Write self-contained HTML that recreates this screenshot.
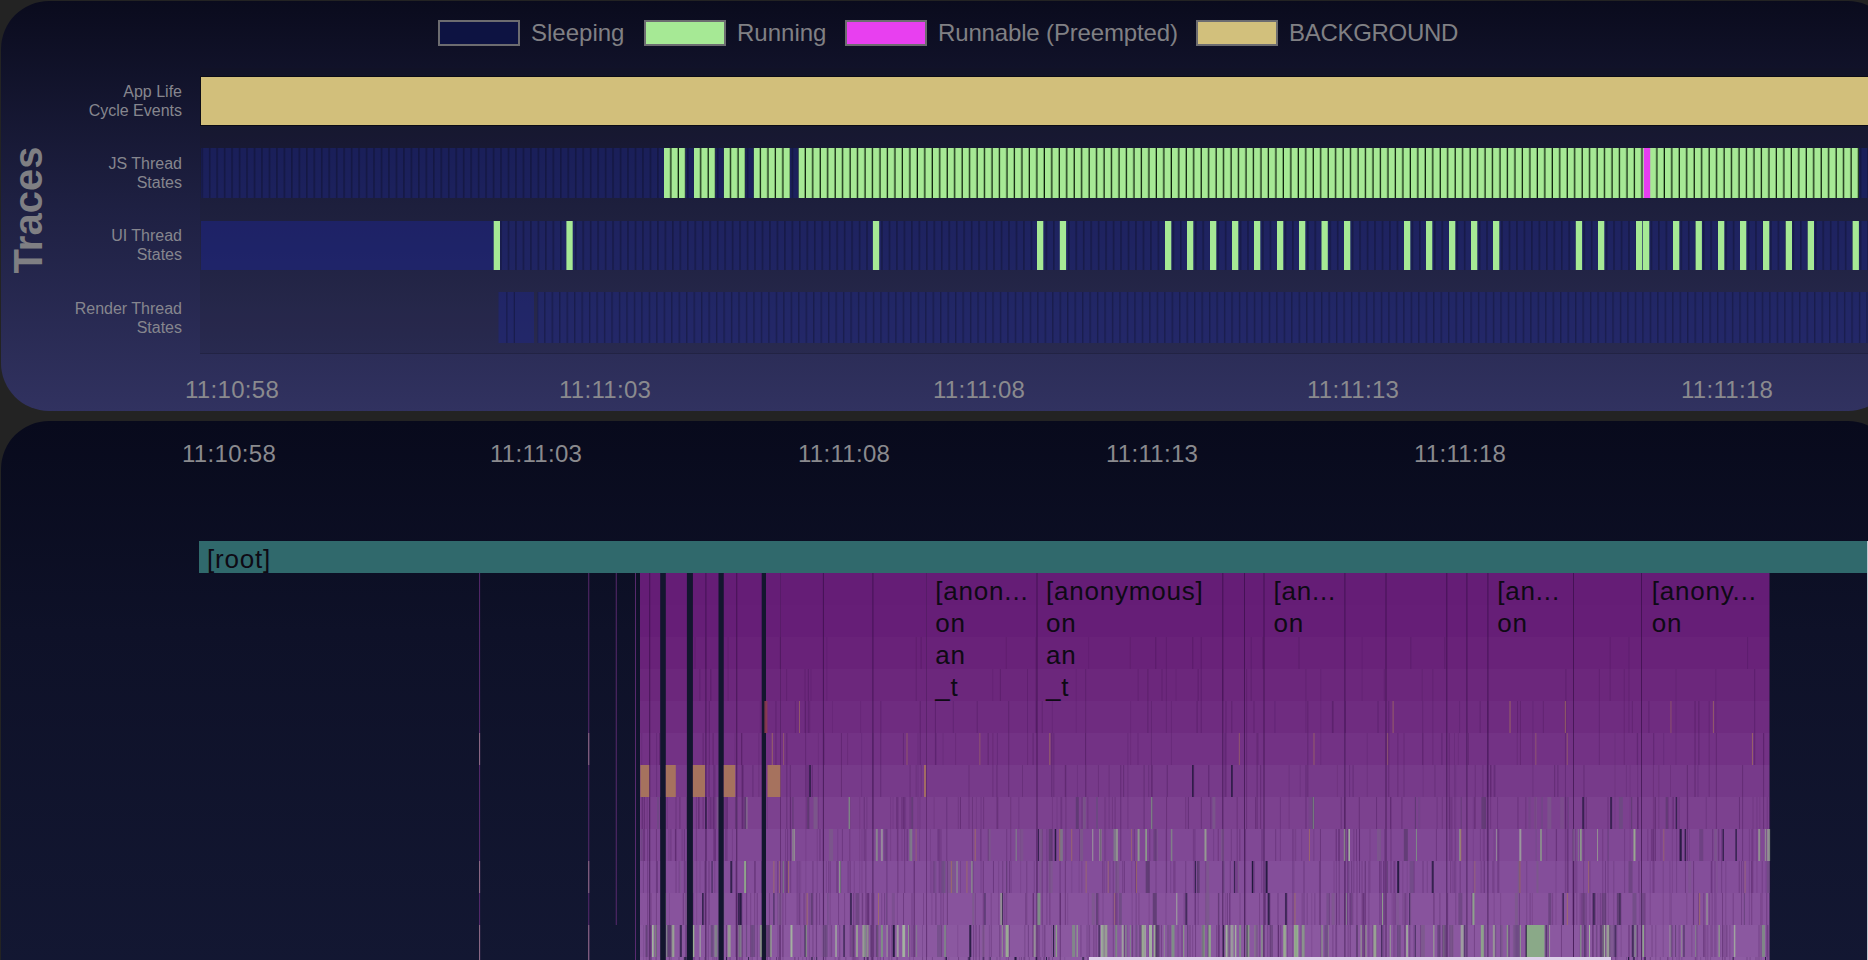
<!DOCTYPE html><html><head><meta charset="utf-8"><style>
*{margin:0;padding:0;box-sizing:border-box}
html,body{width:1868px;height:960px;overflow:hidden;background:#232323;font-family:"Liberation Sans",sans-serif}
.a{position:absolute}
#p1{left:1px;top:1px;width:1895px;height:410px;border-radius:48px;background:linear-gradient(180deg,#0a0b1d 0%,#1e2042 50%,#313260 100%);overflow:hidden}
#p2{left:1px;top:421px;width:1895px;height:700px;border-radius:48px;background:linear-gradient(180deg,#080a1c 0%,#0e1128 30%,#151a37 100%);overflow:hidden}
.lg{position:absolute;top:20px;height:26px;width:82px;border:2px solid #6c6c70}
.lt{position:absolute;top:17px;font-size:24px;line-height:28px;color:#808084;white-space:nowrap}
.rl{position:absolute;right:0;width:183px;text-align:right;font-size:16px;line-height:19px;color:#86868e}
.tm{position:absolute;font-size:24px;line-height:28px;color:#8a8a8e;white-space:nowrap;letter-spacing:0.3px}
.fl{font-family:"Liberation Sans",sans-serif;font-size:26px;letter-spacing:0.8px;fill:#0e0a14}
</style></head><body>
<div id="p1" class="a"><div class="lg" style="left:437px;top:19px;background:#0d1342"></div><div class="lt" style="left:530px;top:17.5px;letter-spacing:0">Sleeping</div><div class="lg" style="left:643px;top:19px;background:#a6e995"></div><div class="lt" style="left:736px;top:17.5px;letter-spacing:0">Running</div><div class="lg" style="left:844px;top:19px;background:#e83ff0"></div><div class="lt" style="left:937px;top:17.5px;letter-spacing:-0.15px">Runnable (Preempted)</div><div class="lg" style="left:1195px;top:19px;background:#d2c07c"></div><div class="lt" style="left:1288px;top:17.5px;letter-spacing:-0.3px">BACKGROUND</div><div class="a" style="left:-38.2px;top:188.6px;width:130px;height:40px;font-size:40px;font-weight:bold;line-height:40px;color:#7f7f83;transform:rotate(-90deg);transform-origin:50% 50%;text-align:center;white-space:nowrap">Traces</div><div class="rl" style="left:-2px;top:81px">App Life<br>Cycle Events</div><div class="rl" style="left:-2px;top:153px">JS Thread<br>States</div><div class="rl" style="left:-2px;top:225px">UI Thread<br>States</div><div class="rl" style="left:-2px;top:298px">Render Thread<br>States</div><div class="tm" style="left:184px;top:374.5px">11:10:58</div><div class="tm" style="left:558px;top:374.5px">11:11:03</div><div class="tm" style="left:932px;top:374.5px">11:11:08</div><div class="tm" style="left:1306px;top:374.5px">11:11:13</div><div class="tm" style="left:1680px;top:374.5px">11:11:18</div><svg class="a" style="left:-1px;top:-1px" width="1868" height="411"><rect x="200" y="68" width="1668" height="286" fill="#181818" fill-opacity="0.12"/><rect x="200" y="353" width="1668" height="1" fill="#000" fill-opacity="0.15"/><rect x="200.5" y="76.5" width="1700" height="49" fill="#d2bf7b" stroke="#0b0b16" stroke-width="1"/><defs><pattern id="st" x="201.4" y="0" width="7.47" height="10" patternUnits="userSpaceOnUse"><rect x="0" y="0" width="7.47" height="10" fill="#1c268c" fill-opacity="0.42"/><rect x="0" y="0" width="1.6" height="10" fill="#000" fill-opacity="0.25"/></pattern><pattern id="gr" x="664" y="0" width="7.47" height="10" patternUnits="userSpaceOnUse"><rect x="0" y="0" width="7.47" height="10" fill="#a6e995"/><rect x="6.2" y="0" width="1.27" height="10" fill="#0c1f0a"/></pattern></defs><rect x="201" y="148" width="1667" height="50" fill="url(#st)"/><rect x="664" y="148" width="21.41" height="50" fill="url(#gr)"/><rect x="693.88" y="148" width="21.41" height="50" fill="url(#gr)"/><rect x="723.76" y="148" width="21.41" height="50" fill="url(#gr)"/><rect x="753.64" y="148" width="36.35" height="50" fill="url(#gr)"/><rect x="798.46" y="148" width="1060.54" height="50" fill="url(#gr)"/><rect x="1643.8" y="148" width="6.4" height="50" fill="#e63ff0"/><rect x="201" y="221" width="293" height="49" fill="#1c2696" fill-opacity="0.45"/><rect x="494" y="221" width="1374" height="49" fill="url(#st)"/><rect x="493.7" y="221" width="6.3" height="49" fill="#a6e995"/><rect x="566.4" y="221" width="6.3" height="49" fill="#a6e995"/><rect x="872.9" y="221" width="6.3" height="49" fill="#a6e995"/><rect x="1037" y="221" width="6.3" height="49" fill="#a6e995"/><rect x="1059.8" y="221" width="6.3" height="49" fill="#a6e995"/><rect x="1165" y="221" width="6.3" height="49" fill="#a6e995"/><rect x="1187" y="221" width="6.3" height="49" fill="#a6e995"/><rect x="1210" y="221" width="6.3" height="49" fill="#a6e995"/><rect x="1232" y="221" width="6.3" height="49" fill="#a6e995"/><rect x="1254" y="221" width="6.3" height="49" fill="#a6e995"/><rect x="1277" y="221" width="6.3" height="49" fill="#a6e995"/><rect x="1299" y="221" width="6.3" height="49" fill="#a6e995"/><rect x="1321.5" y="221" width="6.3" height="49" fill="#a6e995"/><rect x="1344" y="221" width="6.3" height="49" fill="#a6e995"/><rect x="1404" y="221" width="6.3" height="49" fill="#a6e995"/><rect x="1426" y="221" width="6.3" height="49" fill="#a6e995"/><rect x="1449" y="221" width="6.3" height="49" fill="#a6e995"/><rect x="1471" y="221" width="6.3" height="49" fill="#a6e995"/><rect x="1493" y="221" width="6.3" height="49" fill="#a6e995"/><rect x="1575.8" y="221" width="6.3" height="49" fill="#a6e995"/><rect x="1598" y="221" width="6.3" height="49" fill="#a6e995"/><rect x="1636" y="221" width="6.3" height="49" fill="#a6e995"/><rect x="1643" y="221" width="6.3" height="49" fill="#a6e995"/><rect x="1673" y="221" width="6.3" height="49" fill="#a6e995"/><rect x="1695.6" y="221" width="6.3" height="49" fill="#a6e995"/><rect x="1718" y="221" width="6.3" height="49" fill="#a6e995"/><rect x="1740" y="221" width="6.3" height="49" fill="#a6e995"/><rect x="1763" y="221" width="6.3" height="49" fill="#a6e995"/><rect x="1785.7" y="221" width="6.3" height="49" fill="#a6e995"/><rect x="1807.7" y="221" width="6.3" height="49" fill="#a6e995"/><rect x="1852.6" y="221" width="6.3" height="49" fill="#a6e995"/><defs><pattern id="st2" x="551.6" y="0" width="7.47" height="10" patternUnits="userSpaceOnUse"><rect x="0" y="0" width="7.47" height="10" fill="#1c268c" fill-opacity="0.42"/><rect x="0" y="0" width="1.4" height="10" fill="#000" fill-opacity="0.25"/></pattern></defs><rect x="498.5" y="292" width="35.5" height="51" fill="#1c268c" fill-opacity="0.45"/><rect x="506.2" y="292" width="1.3" height="51" fill="#000" fill-opacity="0.25"/><rect x="513.7" y="292" width="1.3" height="51" fill="#000" fill-opacity="0.25"/><rect x="537.4" y="292" width="1331" height="51" fill="url(#st2)"/></svg></div>
<div id="p2" class="a"><div class="tm" style="left:181px;top:18.5px">11:10:58</div><div class="tm" style="left:489px;top:18.5px">11:11:03</div><div class="tm" style="left:797px;top:18.5px">11:11:08</div><div class="tm" style="left:1105px;top:18.5px">11:11:13</div><div class="tm" style="left:1413px;top:18.5px">11:11:18</div></div>
<svg class="a" style="left:0;top:0" width="1868" height="960"><rect x="199" y="541" width="1668" height="32" fill="#30696c"/><text class="fl" x="207" y="567.5">[root]</text><rect x="640" y="573" width="1129.5" height="32" fill="#651d76"/><rect x="640" y="605" width="1129.5" height="32" fill="#661e77"/><rect x="640" y="637" width="1129.5" height="32" fill="#692279"/><rect x="640" y="669" width="1129.5" height="32" fill="#6c277c"/><rect x="640" y="701" width="1129.5" height="32" fill="#6f2c80"/><rect x="640" y="733" width="1129.5" height="32" fill="#733285"/><rect x="640" y="765" width="1129.5" height="32" fill="#773a8a"/><rect x="640" y="797" width="1129.5" height="32" fill="#7c418f"/><rect x="640" y="829" width="1129.5" height="32" fill="#804895"/><rect x="640" y="861" width="1129.5" height="32" fill="#844e9a"/><rect x="640" y="893" width="1129.5" height="32" fill="#88539d"/><rect x="640" y="925" width="1129.5" height="32" fill="#8b58a0"/><rect x="640" y="957" width="1129.5" height="32" fill="#8e5ca3"/><rect x="479.1" y="573" width="1" height="387" fill="#6a3080" fill-opacity="0.8"/><rect x="588.25" y="573" width="1" height="387" fill="#6a3080" fill-opacity="0.8"/><rect x="615.75" y="573" width="1" height="352" fill="#6a3080" fill-opacity="0.8"/><rect x="635.0" y="573" width="1" height="387" fill="#6a3080" fill-opacity="0.8"/><rect x="479.1" y="733" width="1" height="32" fill="#a08090" fill-opacity="0.8"/><rect x="479.1" y="861" width="1" height="32" fill="#a08090" fill-opacity="0.8"/><rect x="479.1" y="925" width="1" height="35" fill="#a08090" fill-opacity="0.8"/><rect x="588.25" y="733" width="1" height="32" fill="#a08090" fill-opacity="0.8"/><rect x="588.25" y="861" width="1" height="32" fill="#a08090" fill-opacity="0.8"/><rect x="588.25" y="925" width="1" height="35" fill="#a08090" fill-opacity="0.8"/><rect x="649.2" y="573" width="1" height="387" fill="#2e0c40" fill-opacity="0.6"/><rect x="705.4" y="573" width="1" height="387" fill="#2e0c40" fill-opacity="0.6"/><rect x="736.25" y="573" width="1" height="387" fill="#2e0c40" fill-opacity="0.6"/><rect x="822.9" y="573" width="1" height="387" fill="#2e0c40" fill-opacity="0.6"/><rect x="872.4" y="573" width="1" height="387" fill="#2e0c40" fill-opacity="0.6"/><rect x="1036.5" y="573" width="1" height="387" fill="#2e0c40" fill-opacity="0.6"/><rect x="1222.3" y="573" width="1" height="387" fill="#2e0c40" fill-opacity="0.6"/><rect x="1244" y="573" width="1" height="387" fill="#2e0c40" fill-opacity="0.6"/><rect x="1263.5" y="573" width="1" height="387" fill="#2e0c40" fill-opacity="0.6"/><rect x="1344.4" y="573" width="1" height="387" fill="#2e0c40" fill-opacity="0.6"/><rect x="1385.5" y="573" width="1" height="387" fill="#2e0c40" fill-opacity="0.6"/><rect x="1446.3" y="573" width="1" height="387" fill="#2e0c40" fill-opacity="0.6"/><rect x="1466.4" y="573" width="1" height="387" fill="#2e0c40" fill-opacity="0.6"/><rect x="1487.4" y="573" width="1" height="387" fill="#2e0c40" fill-opacity="0.6"/><rect x="1573" y="573" width="1" height="387" fill="#2e0c40" fill-opacity="0.6"/><rect x="1641" y="573" width="1" height="387" fill="#2e0c40" fill-opacity="0.6"/><rect x="780" y="573" width="1" height="387" fill="#4a1a5a" fill-opacity="0.5"/><rect x="926" y="573" width="1" height="387" fill="#4a1a5a" fill-opacity="0.5"/><rect x="1005.77" y="637" width="1" height="32" fill="#3c0f4c" fill-opacity="0.2108094041773299"/><rect x="694.54" y="637" width="1" height="32" fill="#3c0f4c" fill-opacity="0.20410845088989465"/><rect x="705.51" y="637" width="1" height="32" fill="#3c0f4c" fill-opacity="0.1286240014416565"/><rect x="1129.8" y="637" width="1" height="32" fill="#3c0f4c" fill-opacity="0.17535249002921574"/><rect x="1262.41" y="637" width="1" height="32" fill="#3c0f4c" fill-opacity="0.31017598867456875"/><rect x="779.83" y="637" width="1" height="32" fill="#3c0f4c" fill-opacity="0.2650439606182995"/><rect x="1298.5" y="637" width="1" height="32" fill="#3c0f4c" fill-opacity="0.2527336781820247"/><rect x="1088.05" y="637" width="1" height="32" fill="#3c0f4c" fill-opacity="0.13071401654208395"/><rect x="1609.64" y="637" width="1" height="64" fill="#3c0f4c" fill-opacity="0.216401980021437"/><rect x="1250.7" y="637" width="1" height="64" fill="#3c0f4c" fill-opacity="0.2488591737129469"/><rect x="1410.32" y="637" width="1" height="32" fill="#3c0f4c" fill-opacity="0.2537680376423672"/><rect x="1361.65" y="637" width="1" height="64" fill="#3c0f4c" fill-opacity="0.14240903247878867"/><rect x="1444.33" y="637" width="1" height="32" fill="#3c0f4c" fill-opacity="0.2623722064299174"/><rect x="1200.7" y="637" width="1" height="96" fill="#3c0f4c" fill-opacity="0.2987626182455856"/><rect x="1165.9" y="637" width="1" height="96" fill="#3c0f4c" fill-opacity="0.20316394186725023"/><rect x="920.6" y="637" width="1" height="32" fill="#3c0f4c" fill-opacity="0.2807687197578014"/><rect x="915.71" y="637" width="1" height="64" fill="#3c0f4c" fill-opacity="0.24079519587663384"/><rect x="1628.47" y="637" width="1" height="96" fill="#3c0f4c" fill-opacity="0.1862256859247429"/><rect x="1747.11" y="637" width="1" height="32" fill="#3c0f4c" fill-opacity="0.23774455104893627"/><rect x="826.32" y="637" width="1" height="64" fill="#3c0f4c" fill-opacity="0.15495644297191608"/><rect x="1192.28" y="637" width="1" height="32" fill="#3c0f4c" fill-opacity="0.3412643891847852"/><rect x="727.67" y="637" width="1" height="64" fill="#3c0f4c" fill-opacity="0.19822814330397495"/><rect x="1035.53" y="637" width="1" height="96" fill="#3c0f4c" fill-opacity="0.2533758969849732"/><rect x="1155.28" y="637" width="1" height="32" fill="#3c0f4c" fill-opacity="0.3372766518748256"/><rect x="1175.49" y="669" width="1" height="32" fill="#3c0f4c" fill-opacity="0.13395396834736054"/><rect x="1432.34" y="669" width="1" height="96" fill="#3c0f4c" fill-opacity="0.18545697238165432"/><rect x="1075.75" y="669" width="1" height="64" fill="#3c0f4c" fill-opacity="0.12518947345278536"/><rect x="1161.48" y="669" width="1" height="32" fill="#3c0f4c" fill-opacity="0.26051149500110765"/><rect x="1197.63" y="669" width="1" height="32" fill="#3c0f4c" fill-opacity="0.2966935873486798"/><rect x="786.09" y="669" width="1" height="32" fill="#3c0f4c" fill-opacity="0.2115164660656335"/><rect x="1675.54" y="669" width="1" height="96" fill="#3c0f4c" fill-opacity="0.13853369927603187"/><rect x="1147.36" y="669" width="1" height="64" fill="#3c0f4c" fill-opacity="0.3231782800815478"/><rect x="1565.38" y="669" width="1" height="64" fill="#3c0f4c" fill-opacity="0.2824712431841954"/><rect x="1754.21" y="669" width="1" height="96" fill="#3c0f4c" fill-opacity="0.34027817691171797"/><rect x="810.47" y="669" width="1" height="32" fill="#3c0f4c" fill-opacity="0.15479862811677214"/><rect x="1383.79" y="669" width="1" height="32" fill="#3c0f4c" fill-opacity="0.23154142797851202"/><rect x="1305.41" y="669" width="1" height="64" fill="#3c0f4c" fill-opacity="0.18484406613514964"/><rect x="804.54" y="669" width="1" height="64" fill="#3c0f4c" fill-opacity="0.2602568601091093"/><rect x="999.87" y="669" width="1" height="32" fill="#3c0f4c" fill-opacity="0.2788135411412749"/><rect x="1222.25" y="669" width="1" height="32" fill="#3c0f4c" fill-opacity="0.22502805610666118"/><rect x="1623.77" y="669" width="1" height="96" fill="#3c0f4c" fill-opacity="0.2115560150277997"/><rect x="1085.16" y="669" width="1" height="96" fill="#3c0f4c" fill-opacity="0.26588660010771303"/><rect x="710.31" y="669" width="1" height="32" fill="#3c0f4c" fill-opacity="0.3464735481740201"/><rect x="1137.69" y="669" width="1" height="32" fill="#3c0f4c" fill-opacity="0.19821234001343896"/><rect x="699.38" y="669" width="1" height="32" fill="#3c0f4c" fill-opacity="0.2503602298706094"/><rect x="1246.11" y="669" width="1" height="64" fill="#3c0f4c" fill-opacity="0.2611595704843491"/><rect x="719.42" y="669" width="1" height="32" fill="#3c0f4c" fill-opacity="0.26123586719135006"/><rect x="807.79" y="669" width="1" height="64" fill="#3c0f4c" fill-opacity="0.3397576455019384"/><rect x="1320.27" y="669" width="1" height="96" fill="#3c0f4c" fill-opacity="0.14825371307530483"/><rect x="1598.87" y="669" width="1" height="96" fill="#3c0f4c" fill-opacity="0.23049087406159913"/><rect x="992.24" y="669" width="1" height="32" fill="#3c0f4c" fill-opacity="0.14350315185207874"/><rect x="1027.01" y="669" width="1" height="64" fill="#3c0f4c" fill-opacity="0.23008304700729798"/><rect x="1421.68" y="669" width="1" height="32" fill="#3c0f4c" fill-opacity="0.16719945154135435"/><rect x="1715.31" y="669" width="1" height="64" fill="#3c0f4c" fill-opacity="0.15371858394679086"/><rect x="1253.51" y="701" width="1" height="32" fill="#3c0f4c" fill-opacity="0.29437288069326556"/><rect x="976.69" y="701" width="1" height="32" fill="#3c0f4c" fill-opacity="0.2801252607587944"/><rect x="934.93" y="701" width="1" height="64" fill="#3c0f4c" fill-opacity="0.32889946504249923"/><rect x="1041.76" y="701" width="1" height="32" fill="#3c0f4c" fill-opacity="0.24249625142336217"/><rect x="1519.94" y="701" width="1" height="64" fill="#3c0f4c" fill-opacity="0.2663816428281336"/><rect x="1332.64" y="701" width="1" height="32" fill="#3c0f4c" fill-opacity="0.3053980745007035"/><rect x="1564.31" y="701" width="1" height="32" fill="#3c0f4c" fill-opacity="0.16598113618088442"/><rect x="1196.6" y="701" width="1" height="32" fill="#3c0f4c" fill-opacity="0.3476088249417061"/><rect x="1532.43" y="701" width="1" height="96" fill="#3c0f4c" fill-opacity="0.179610103551584"/><rect x="1422.2" y="701" width="1" height="64" fill="#3c0f4c" fill-opacity="0.2228623658863464"/><rect x="1698.37" y="701" width="1" height="64" fill="#3c0f4c" fill-opacity="0.3396501452039066"/><rect x="1051.86" y="701" width="1" height="32" fill="#3c0f4c" fill-opacity="0.143496143908609"/><rect x="1170.96" y="701" width="1" height="64" fill="#3c0f4c" fill-opacity="0.1670058735535313"/><rect x="1344.88" y="701" width="1" height="32" fill="#3c0f4c" fill-opacity="0.23027888804015378"/><rect x="1377.54" y="701" width="1" height="32" fill="#3c0f4c" fill-opacity="0.3119692257935903"/><rect x="775.43" y="701" width="1" height="96" fill="#3c0f4c" fill-opacity="0.29992966334256066"/><rect x="1487.28" y="701" width="1" height="96" fill="#3c0f4c" fill-opacity="0.3244725310136377"/><rect x="1130.12" y="701" width="1" height="64" fill="#3c0f4c" fill-opacity="0.13995246726415617"/><rect x="1708.69" y="701" width="1" height="96" fill="#3c0f4c" fill-opacity="0.22652692423998538"/><rect x="1479.62" y="701" width="1" height="32" fill="#3c0f4c" fill-opacity="0.2867036930958695"/><rect x="832.02" y="701" width="1" height="32" fill="#3c0f4c" fill-opacity="0.12633623566303148"/><rect x="1307.32" y="701" width="1" height="96" fill="#3c0f4c" fill-opacity="0.3054954558674051"/><rect x="805.1" y="701" width="1" height="96" fill="#3c0f4c" fill-opacity="0.2711717073292846"/><rect x="1035.79" y="701" width="1" height="32" fill="#3c0f4c" fill-opacity="0.1249212350940397"/><rect x="1542.87" y="701" width="1" height="32" fill="#3c0f4c" fill-opacity="0.24111364083278275"/><rect x="1694.53" y="701" width="1" height="96" fill="#3c0f4c" fill-opacity="0.34690636687353904"/><rect x="860.03" y="701" width="1" height="32" fill="#3c0f4c" fill-opacity="0.1264385568940789"/><rect x="880.33" y="701" width="1" height="32" fill="#3c0f4c" fill-opacity="0.29564635042012144"/><rect x="1008.2" y="701" width="1" height="96" fill="#3c0f4c" fill-opacity="0.31186484918107793"/><rect x="708.79" y="701" width="1" height="64" fill="#3c0f4c" fill-opacity="0.3264719202770071"/><rect x="1388.27" y="701" width="1" height="96" fill="#3c0f4c" fill-opacity="0.31024212696459774"/><rect x="1631.89" y="701" width="1" height="32" fill="#3c0f4c" fill-opacity="0.24231974136026474"/><rect x="1231.3" y="701" width="1" height="32" fill="#3c0f4c" fill-opacity="0.32074528769574107"/><rect x="1517.06" y="701" width="1" height="32" fill="#3c0f4c" fill-opacity="0.2984889620826334"/><rect x="809.2" y="701" width="1" height="32" fill="#3c0f4c" fill-opacity="0.22890337446624995"/><rect x="1459.11" y="701" width="1" height="32" fill="#3c0f4c" fill-opacity="0.19497589474123872"/><rect x="1225.47" y="701" width="1" height="96" fill="#3c0f4c" fill-opacity="0.3003826693340593"/><rect x="759.85" y="701" width="1" height="32" fill="#3c0f4c" fill-opacity="0.1771536938399107"/><rect x="952.78" y="701" width="1" height="32" fill="#3c0f4c" fill-opacity="0.2367742181122337"/><rect x="1274.47" y="701" width="1" height="32" fill="#3c0f4c" fill-opacity="0.22194713052281093"/><rect x="1331.85" y="701" width="1" height="32" fill="#3c0f4c" fill-opacity="0.2793281305860927"/><rect x="1150.92" y="701" width="1" height="96" fill="#3c0f4c" fill-opacity="0.23678292763639433"/><rect x="919.73" y="701" width="1" height="64" fill="#3c0f4c" fill-opacity="0.33224036908662447"/><rect x="1648.37" y="701" width="1" height="32" fill="#3c0f4c" fill-opacity="0.31319995018043734"/><rect x="794.89" y="701" width="1" height="32" fill="#3c0f4c" fill-opacity="0.21024380707507698"/><rect x="996.9" y="733" width="1" height="32" fill="#3c0f4c" fill-opacity="0.2185178957642449"/><rect x="880.23" y="733" width="1" height="64" fill="#3c0f4c" fill-opacity="0.3003052839498257"/><rect x="1653.19" y="733" width="1" height="32" fill="#3c0f4c" fill-opacity="0.33608607146671093"/><rect x="1366.79" y="733" width="1" height="64" fill="#3c0f4c" fill-opacity="0.15288516952257455"/><rect x="1637.16" y="733" width="1" height="96" fill="#3c0f4c" fill-opacity="0.1705052010844415"/><rect x="1715.85" y="733" width="1" height="96" fill="#3c0f4c" fill-opacity="0.3235345622306315"/><rect x="823.88" y="733" width="1" height="32" fill="#3c0f4c" fill-opacity="0.1571371937726022"/><rect x="1127.4" y="733" width="1" height="96" fill="#3c0f4c" fill-opacity="0.19799671319792855"/><rect x="861.09" y="733" width="1" height="64" fill="#3c0f4c" fill-opacity="0.14120462600957373"/><rect x="1053.34" y="733" width="1" height="64" fill="#3c0f4c" fill-opacity="0.24743155699591543"/><rect x="1137.5" y="733" width="1" height="32" fill="#3c0f4c" fill-opacity="0.20839924831870577"/><rect x="1224.44" y="733" width="1" height="64" fill="#3c0f4c" fill-opacity="0.23782032542659476"/><rect x="712.62" y="733" width="1" height="32" fill="#3c0f4c" fill-opacity="0.34349007048882707"/><rect x="758.35" y="733" width="1" height="64" fill="#3c0f4c" fill-opacity="0.18254170528877736"/><rect x="1663.21" y="733" width="1" height="32" fill="#3c0f4c" fill-opacity="0.18220260242990108"/><rect x="786.33" y="733" width="1" height="96" fill="#3c0f4c" fill-opacity="0.31540520027000585"/><rect x="1403.51" y="733" width="1" height="64" fill="#3c0f4c" fill-opacity="0.21336800042058995"/><rect x="1246.09" y="733" width="1" height="96" fill="#3c0f4c" fill-opacity="0.2810960127057221"/><rect x="741.05" y="733" width="1" height="32" fill="#3c0f4c" fill-opacity="0.3039051371685213"/><rect x="847.09" y="733" width="1" height="32" fill="#3c0f4c" fill-opacity="0.18185238745674814"/><rect x="659.01" y="733" width="1" height="32" fill="#3c0f4c" fill-opacity="0.3043745760614196"/><rect x="734.59" y="733" width="1" height="32" fill="#3c0f4c" fill-opacity="0.13532318302112614"/><rect x="1614.5" y="733" width="1" height="96" fill="#3c0f4c" fill-opacity="0.12265565617386182"/><rect x="1763.07" y="733" width="1" height="96" fill="#3c0f4c" fill-opacity="0.33313393533638225"/><rect x="942.55" y="733" width="1" height="32" fill="#3c0f4c" fill-opacity="0.12993730866305866"/><rect x="1441.42" y="733" width="1" height="32" fill="#3c0f4c" fill-opacity="0.3429189477647341"/><rect x="935.81" y="733" width="1" height="32" fill="#3c0f4c" fill-opacity="0.166406697216755"/><rect x="992.4" y="733" width="1" height="64" fill="#3c0f4c" fill-opacity="0.24214974310014098"/><rect x="872.53" y="733" width="1" height="96" fill="#3c0f4c" fill-opacity="0.23502037796822306"/><rect x="840.94" y="733" width="1" height="64" fill="#3c0f4c" fill-opacity="0.3048461573137158"/><rect x="1763.29" y="733" width="1" height="32" fill="#3c0f4c" fill-opacity="0.12352960701465453"/><rect x="1468.01" y="733" width="1" height="32" fill="#3c0f4c" fill-opacity="0.2382740296363454"/><rect x="917.5" y="733" width="1" height="96" fill="#3c0f4c" fill-opacity="0.14444470935623102"/><rect x="1564.97" y="733" width="1" height="96" fill="#3c0f4c" fill-opacity="0.27099717128165335"/><rect x="1256.6" y="733" width="1" height="96" fill="#3c0f4c" fill-opacity="0.3431718515346778"/><rect x="987.64" y="733" width="1" height="32" fill="#3c0f4c" fill-opacity="0.3459613242954033"/><rect x="1027.08" y="733" width="1" height="32" fill="#3c0f4c" fill-opacity="0.2130804730025735"/><rect x="1032.56" y="733" width="1" height="32" fill="#3c0f4c" fill-opacity="0.3125073178101947"/><rect x="656.1" y="733" width="1" height="64" fill="#3c0f4c" fill-opacity="0.21907036280294281"/><rect x="702.58" y="733" width="1" height="96" fill="#3c0f4c" fill-opacity="0.3202236988869821"/><rect x="1397.38" y="733" width="1" height="64" fill="#3c0f4c" fill-opacity="0.25771903511664995"/><rect x="1422.39" y="733" width="1" height="32" fill="#3c0f4c" fill-opacity="0.22567417698078576"/><rect x="817.93" y="733" width="1" height="96" fill="#3c0f4c" fill-opacity="0.12083322391320693"/><rect x="1051.3" y="733" width="1" height="64" fill="#3c0f4c" fill-opacity="0.3437032895276665"/><rect x="1257.92" y="733" width="1" height="32" fill="#3c0f4c" fill-opacity="0.1279227464057755"/><rect x="1636.66" y="733" width="1" height="32" fill="#3c0f4c" fill-opacity="0.202014300913217"/><rect x="641.21" y="733" width="1" height="96" fill="#3c0f4c" fill-opacity="0.13929482898986362"/><rect x="955.05" y="733" width="1" height="32" fill="#3c0f4c" fill-opacity="0.17708126080102618"/><rect x="1516.76" y="733" width="1" height="32" fill="#3c0f4c" fill-opacity="0.18075879773438114"/><rect x="741.38" y="733" width="1" height="96" fill="#3c0f4c" fill-opacity="0.25496416836666613"/><rect x="1085" y="733" width="1" height="64" fill="#3c0f4c" fill-opacity="0.18997624885159783"/><rect x="902.96" y="733" width="1" height="32" fill="#3c0f4c" fill-opacity="0.27123504486191474"/><rect x="1448.71" y="733" width="1" height="96" fill="#3c0f4c" fill-opacity="0.2957916095481141"/><rect x="1454" y="733" width="1" height="96" fill="#3c0f4c" fill-opacity="0.15437652427971818"/><rect x="1457.93" y="733" width="1" height="32" fill="#3c0f4c" fill-opacity="0.13007125533906475"/><rect x="1583.46" y="765" width="1" height="96" fill="#3c0f4c" fill-opacity="0.2887859883997012"/><rect x="1557.4" y="765" width="1" height="32" fill="#3c0f4c" fill-opacity="0.3292741601948751"/><rect x="1490.36" y="765" width="1" height="32" fill="#3c0f4c" fill-opacity="0.31007409794545543"/><rect x="1299.7" y="765" width="1" height="32" fill="#3c0f4c" fill-opacity="0.1395710916606107"/><rect x="687.28" y="765" width="1" height="64" fill="#3c0f4c" fill-opacity="0.3406886964599102"/><rect x="1065.39" y="765" width="1" height="96" fill="#3c0f4c" fill-opacity="0.24846126669406496"/><rect x="1349.06" y="765" width="1" height="32" fill="#3c0f4c" fill-opacity="0.23253769241774352"/><rect x="643.74" y="765" width="1" height="32" fill="#3c0f4c" fill-opacity="0.2921010351514523"/><rect x="1208.11" y="765" width="1" height="32" fill="#3c0f4c" fill-opacity="0.27163888254000046"/><rect x="714.6" y="765" width="1" height="96" fill="#3c0f4c" fill-opacity="0.17800451223641872"/><rect x="724.09" y="765" width="1" height="64" fill="#3c0f4c" fill-opacity="0.1740006930213202"/><rect x="1494.4" y="765" width="1" height="32" fill="#3c0f4c" fill-opacity="0.2901605760267706"/><rect x="1742.09" y="765" width="1" height="96" fill="#3c0f4c" fill-opacity="0.31447218759349665"/><rect x="726.68" y="765" width="1" height="64" fill="#3c0f4c" fill-opacity="0.2964031243380302"/><rect x="1336.87" y="765" width="1" height="32" fill="#3c0f4c" fill-opacity="0.13781851848909416"/><rect x="806.52" y="765" width="1" height="64" fill="#3c0f4c" fill-opacity="0.26985290319427824"/><rect x="1422.62" y="765" width="1" height="32" fill="#3c0f4c" fill-opacity="0.12286791906473607"/><rect x="708.52" y="765" width="1" height="64" fill="#3c0f4c" fill-opacity="0.3436770721119669"/><rect x="752.41" y="765" width="1" height="32" fill="#3c0f4c" fill-opacity="0.2754127610669381"/><rect x="968.52" y="765" width="1" height="64" fill="#3c0f4c" fill-opacity="0.2268724562760923"/><rect x="1166.73" y="765" width="1" height="32" fill="#3c0f4c" fill-opacity="0.3484590936865096"/><rect x="1260.18" y="765" width="1" height="64" fill="#3c0f4c" fill-opacity="0.3449689194541162"/><rect x="1697.5" y="765" width="1" height="32" fill="#3c0f4c" fill-opacity="0.18660544228228393"/><rect x="726.37" y="765" width="1" height="96" fill="#3c0f4c" fill-opacity="0.34861240112625924"/><rect x="1076.95" y="765" width="1" height="32" fill="#3c0f4c" fill-opacity="0.1371609595696527"/><rect x="742" y="765" width="1" height="64" fill="#3c0f4c" fill-opacity="0.33913027743024615"/><rect x="789.78" y="765" width="1" height="64" fill="#3c0f4c" fill-opacity="0.32397829671141387"/><rect x="1434.42" y="765" width="1" height="32" fill="#3c0f4c" fill-opacity="0.23451422927135457"/><rect x="1629.61" y="765" width="1" height="96" fill="#3c0f4c" fill-opacity="0.125711912710853"/><rect x="644.06" y="765" width="1" height="96" fill="#3c0f4c" fill-opacity="0.2767652668332671"/><rect x="1097.92" y="765" width="1" height="32" fill="#3c0f4c" fill-opacity="0.2157216747038873"/><rect x="1064.81" y="765" width="1" height="32" fill="#3c0f4c" fill-opacity="0.31325313773903696"/><rect x="641.97" y="765" width="1" height="64" fill="#3c0f4c" fill-opacity="0.3129954827696062"/><rect x="775.59" y="765" width="1" height="32" fill="#3c0f4c" fill-opacity="0.28399542013329243"/><rect x="1658.32" y="765" width="1" height="64" fill="#3c0f4c" fill-opacity="0.1782388097465862"/><rect x="713.39" y="765" width="1" height="96" fill="#3c0f4c" fill-opacity="0.3497222763306911"/><rect x="1305.48" y="765" width="1" height="64" fill="#3c0f4c" fill-opacity="0.33284556253591274"/><rect x="1493.51" y="765" width="1" height="32" fill="#3c0f4c" fill-opacity="0.18454667205656516"/><rect x="698.3" y="765" width="1" height="64" fill="#3c0f4c" fill-opacity="0.26604160431910806"/><rect x="808.2" y="765" width="1" height="64" fill="#3c0f4c" fill-opacity="0.2203353711032978"/><rect x="996.47" y="765" width="1" height="64" fill="#3c0f4c" fill-opacity="0.30058281518457836"/><rect x="1123.14" y="765" width="1" height="32" fill="#3c0f4c" fill-opacity="0.3067513215182776"/><rect x="1352.6" y="765" width="1" height="32" fill="#3c0f4c" fill-opacity="0.285501693848764"/><rect x="695.88" y="765" width="1" height="96" fill="#3c0f4c" fill-opacity="0.2236978972809779"/><rect x="1490.14" y="765" width="1" height="64" fill="#3c0f4c" fill-opacity="0.23168226846504722"/><rect x="1670" y="765" width="1" height="32" fill="#3c0f4c" fill-opacity="0.15927544473560407"/><rect x="1108.59" y="765" width="1" height="64" fill="#3c0f4c" fill-opacity="0.18848752907530097"/><rect x="1474.74" y="765" width="1" height="64" fill="#3c0f4c" fill-opacity="0.21342813097595364"/><rect x="909.57" y="765" width="1" height="96" fill="#3c0f4c" fill-opacity="0.24818399156511928"/><rect x="1085.44" y="765" width="1" height="32" fill="#3c0f4c" fill-opacity="0.2679371575801156"/><rect x="724.91" y="765" width="1" height="96" fill="#3c0f4c" fill-opacity="0.24658890471313746"/><rect x="1151.65" y="765" width="1" height="64" fill="#3c0f4c" fill-opacity="0.3491892761336789"/><rect x="1148.23" y="765" width="1" height="32" fill="#3c0f4c" fill-opacity="0.24599061864803454"/><rect x="915.69" y="765" width="1" height="32" fill="#3c0f4c" fill-opacity="0.19864970376976607"/><rect x="742.89" y="765" width="1" height="32" fill="#3c0f4c" fill-opacity="0.20471022702323077"/><rect x="1554.17" y="765" width="1" height="32" fill="#3c0f4c" fill-opacity="0.32406783561869557"/><rect x="1486.74" y="765" width="1" height="96" fill="#3c0f4c" fill-opacity="0.20805271234507278"/><rect x="1482.43" y="765" width="1" height="32" fill="#3c0f4c" fill-opacity="0.20667913714166852"/><rect x="1022" y="765" width="1" height="32" fill="#3c0f4c" fill-opacity="0.2345735559152719"/><rect x="1288.65" y="765" width="1" height="64" fill="#3c0f4c" fill-opacity="0.14895097440446337"/><rect x="1208.59" y="765" width="1" height="32" fill="#3c0f4c" fill-opacity="0.1412975761468321"/><rect x="1652.92" y="765" width="1" height="96" fill="#3c0f4c" fill-opacity="0.21194414145150847"/><rect x="1143.6" y="765" width="1" height="64" fill="#3c0f4c" fill-opacity="0.3151972455330041"/><rect x="1625.93" y="765" width="1" height="32" fill="#3c0f4c" fill-opacity="0.14926681479376555"/><rect x="1120.26" y="765" width="1" height="96" fill="#3c0f4c" fill-opacity="0.3427046911794736"/><rect x="1193.26" y="765" width="1" height="32" fill="#3c0f4c" fill-opacity="0.2100498520132516"/><rect x="1686.85" y="765" width="1" height="96" fill="#3c0f4c" fill-opacity="0.3436154580359056"/><rect x="920.64" y="765" width="1" height="32" fill="#3c0f4c" fill-opacity="0.17147409532596936"/><rect x="811.76" y="765" width="1" height="32" fill="#3c0f4c" fill-opacity="0.3365428286778996"/><rect x="1455.2" y="765" width="1" height="96" fill="#3c0f4c" fill-opacity="0.13955077742669886"/><rect x="1517.47" y="797" width="1" height="32" fill="#3c0f4c" fill-opacity="0.29992868214026025"/><rect x="902.7" y="797" width="1" height="32" fill="#3c0f4c" fill-opacity="0.26846632856469577"/><rect x="983.12" y="797" width="1" height="32" fill="#3c0f4c" fill-opacity="0.2640887292318985"/><rect x="1236.66" y="797" width="1" height="96" fill="#3c0f4c" fill-opacity="0.2806738409823487"/><rect x="766.65" y="797" width="1" height="32" fill="#3c0f4c" fill-opacity="0.1890803353534671"/><rect x="1705.73" y="797" width="1" height="32" fill="#3c0f4c" fill-opacity="0.2092588479072066"/><rect x="892.54" y="797" width="1" height="32" fill="#3c0f4c" fill-opacity="0.12240617717519069"/><rect x="980.57" y="797" width="1" height="96" fill="#3c0f4c" fill-opacity="0.18407883957442783"/><rect x="997.33" y="797" width="1" height="32" fill="#3c0f4c" fill-opacity="0.229319970615535"/><rect x="905.17" y="797" width="1" height="32" fill="#3c0f4c" fill-opacity="0.12673459687040203"/><rect x="1105.14" y="797" width="1" height="64" fill="#3c0f4c" fill-opacity="0.13272100437440795"/><rect x="859.25" y="797" width="1" height="96" fill="#3c0f4c" fill-opacity="0.1386511758652993"/><rect x="897.35" y="797" width="1" height="96" fill="#3c0f4c" fill-opacity="0.3327869904425006"/><rect x="896.15" y="797" width="1" height="32" fill="#3c0f4c" fill-opacity="0.2800392406266321"/><rect x="1451.36" y="797" width="1" height="64" fill="#3c0f4c" fill-opacity="0.2769903370824634"/><rect x="863.73" y="797" width="1" height="64" fill="#3c0f4c" fill-opacity="0.2899997210084232"/><rect x="1210.26" y="797" width="1" height="32" fill="#3c0f4c" fill-opacity="0.2340099910130166"/><rect x="866.37" y="797" width="1" height="32" fill="#3c0f4c" fill-opacity="0.17308602695894415"/><rect x="890.12" y="797" width="1" height="64" fill="#3c0f4c" fill-opacity="0.14507185517954216"/><rect x="1344.35" y="797" width="1" height="32" fill="#3c0f4c" fill-opacity="0.3261895216358047"/><rect x="1187.87" y="797" width="1" height="32" fill="#3c0f4c" fill-opacity="0.3382150998473502"/><rect x="805.34" y="797" width="1" height="96" fill="#3c0f4c" fill-opacity="0.1325024273170403"/><rect x="666.69" y="797" width="1" height="32" fill="#3c0f4c" fill-opacity="0.21553853475990387"/><rect x="1441.79" y="797" width="1" height="32" fill="#3c0f4c" fill-opacity="0.2104639901475433"/><rect x="1654.48" y="797" width="1" height="64" fill="#3c0f4c" fill-opacity="0.2885264661612904"/><rect x="1766.71" y="797" width="1" height="32" fill="#3c0f4c" fill-opacity="0.19572583477092687"/><rect x="849.54" y="797" width="1" height="96" fill="#3c0f4c" fill-opacity="0.12733554819017828"/><rect x="1390.47" y="797" width="1" height="96" fill="#3c0f4c" fill-opacity="0.3129992098807784"/><rect x="1752.54" y="797" width="1" height="96" fill="#3c0f4c" fill-opacity="0.15893001671925377"/><rect x="643.24" y="797" width="1" height="64" fill="#3c0f4c" fill-opacity="0.13857548311976622"/><rect x="1114.6" y="797" width="1" height="32" fill="#3c0f4c" fill-opacity="0.2490596502407072"/><rect x="1497.07" y="797" width="1" height="96" fill="#3c0f4c" fill-opacity="0.20202472080892603"/><rect x="1567.97" y="797" width="1" height="96" fill="#3c0f4c" fill-opacity="0.140184860388407"/><rect x="1436.59" y="797" width="1" height="32" fill="#3c0f4c" fill-opacity="0.20572430956774707"/><rect x="1678.58" y="797" width="1" height="32" fill="#3c0f4c" fill-opacity="0.1943611127419564"/><rect x="1472.8" y="797" width="1" height="96" fill="#3c0f4c" fill-opacity="0.12696487266780648"/><rect x="1104" y="797" width="1" height="96" fill="#3c0f4c" fill-opacity="0.12934938130066218"/><rect x="679.37" y="797" width="1" height="32" fill="#3c0f4c" fill-opacity="0.3047677584113005"/><rect x="710.03" y="797" width="1" height="32" fill="#3c0f4c" fill-opacity="0.2918759650323979"/><rect x="1654.91" y="797" width="1" height="64" fill="#3c0f4c" fill-opacity="0.20348408626491105"/><rect x="1018.35" y="797" width="1" height="32" fill="#3c0f4c" fill-opacity="0.18029966892064148"/><rect x="1449.44" y="797" width="1" height="64" fill="#3c0f4c" fill-opacity="0.3325724570706112"/><rect x="975.92" y="797" width="1" height="32" fill="#3c0f4c" fill-opacity="0.12557904213655152"/><rect x="904.15" y="797" width="1" height="96" fill="#3c0f4c" fill-opacity="0.28458137303634623"/><rect x="1166.06" y="797" width="1" height="96" fill="#3c0f4c" fill-opacity="0.3016537372599599"/><rect x="1671.85" y="797" width="1" height="96" fill="#3c0f4c" fill-opacity="0.15052267323034155"/><rect x="1200.84" y="797" width="1" height="32" fill="#3c0f4c" fill-opacity="0.30459071438121"/><rect x="1474.12" y="797" width="1" height="32" fill="#3c0f4c" fill-opacity="0.25966847318643904"/><rect x="1010.25" y="797" width="1" height="64" fill="#3c0f4c" fill-opacity="0.22597967530211388"/><rect x="1525.34" y="797" width="1" height="32" fill="#3c0f4c" fill-opacity="0.2377334994478651"/><rect x="1082.41" y="797" width="1" height="32" fill="#3c0f4c" fill-opacity="0.1768807278110389"/><rect x="713.12" y="797" width="1" height="32" fill="#3c0f4c" fill-opacity="0.23078867798370692"/><rect x="1255.14" y="797" width="1" height="32" fill="#3c0f4c" fill-opacity="0.34545882730266064"/><rect x="1637.88" y="797" width="1" height="32" fill="#3c0f4c" fill-opacity="0.18092500272138684"/><rect x="734.97" y="797" width="1" height="32" fill="#3c0f4c" fill-opacity="0.21684386331326744"/><rect x="1756.43" y="797" width="1" height="96" fill="#3c0f4c" fill-opacity="0.1598341282745089"/><rect x="790.15" y="797" width="1" height="96" fill="#3c0f4c" fill-opacity="0.26267075855277766"/><rect x="1401.41" y="797" width="1" height="32" fill="#3c0f4c" fill-opacity="0.299342636118832"/><rect x="971.99" y="797" width="1" height="64" fill="#3c0f4c" fill-opacity="0.2503833675500985"/><rect x="1061.27" y="797" width="1" height="64" fill="#3c0f4c" fill-opacity="0.16581372090474875"/><rect x="919.47" y="797" width="1" height="32" fill="#3c0f4c" fill-opacity="0.17416592229354458"/><rect x="957.79" y="797" width="1" height="32" fill="#3c0f4c" fill-opacity="0.19505772139806254"/><rect x="1087.36" y="797" width="1" height="32" fill="#3c0f4c" fill-opacity="0.23668463804610826"/><rect x="901.34" y="797" width="1" height="32" fill="#3c0f4c" fill-opacity="0.27026510698125217"/><rect x="1759.28" y="797" width="1" height="32" fill="#3c0f4c" fill-opacity="0.12103318303224021"/><rect x="1637.15" y="797" width="1" height="32" fill="#3c0f4c" fill-opacity="0.31332796374789135"/><rect x="1672.79" y="797" width="1" height="32" fill="#3c0f4c" fill-opacity="0.3216829020347134"/><rect x="903.05" y="797" width="1" height="32" fill="#3c0f4c" fill-opacity="0.16360183155621183"/><rect x="1738.96" y="797" width="1" height="32" fill="#3c0f4c" fill-opacity="0.33393996199426657"/><rect x="1060.44" y="797" width="1" height="32" fill="#3c0f4c" fill-opacity="0.22329618728682177"/><rect x="933.61" y="797" width="1" height="32" fill="#3c0f4c" fill-opacity="0.14432941434245686"/><rect x="1313.35" y="797" width="1" height="64" fill="#3c0f4c" fill-opacity="0.17005844703774553"/><rect x="1056.46" y="797" width="1" height="32" fill="#3c0f4c" fill-opacity="0.13015830171789658"/><rect x="1769.36" y="797" width="1" height="32" fill="#3c0f4c" fill-opacity="0.25786737492987916"/><rect x="1376.03" y="797" width="1" height="32" fill="#3c0f4c" fill-opacity="0.30739105561835584"/><rect x="1564.87" y="797" width="1" height="96" fill="#3c0f4c" fill-opacity="0.2760135402196357"/><rect x="849.12" y="797" width="1" height="64" fill="#3c0f4c" fill-opacity="0.13792499614345868"/><rect x="675.54" y="797" width="1" height="96" fill="#3c0f4c" fill-opacity="0.2460503118575112"/><rect x="711.46" y="797" width="1" height="32" fill="#3c0f4c" fill-opacity="0.3030440906503665"/><rect x="1390.02" y="797" width="1" height="32" fill="#3c0f4c" fill-opacity="0.26701184751703844"/><rect x="742.96" y="797" width="1" height="32" fill="#3c0f4c" fill-opacity="0.21148759014862295"/><rect x="946.28" y="797" width="1" height="64" fill="#3c0f4c" fill-opacity="0.273596516555153"/><rect x="1111.96" y="797" width="1" height="32" fill="#3c0f4c" fill-opacity="0.1918432339387211"/><rect x="1279.88" y="797" width="1" height="64" fill="#3c0f4c" fill-opacity="0.21523840617971446"/><rect x="660.57" y="797" width="1" height="64" fill="#3c0f4c" fill-opacity="0.2682299884807793"/><rect x="1081.33" y="797" width="1" height="96" fill="#3c0f4c" fill-opacity="0.1668434492994629"/><rect x="646.64" y="797" width="1" height="32" fill="#3c0f4c" fill-opacity="0.2174636050769242"/><rect x="1566.61" y="797" width="1" height="96" fill="#3c0f4c" fill-opacity="0.2528930020559782"/><rect x="1051.96" y="797" width="1" height="32" fill="#3c0f4c" fill-opacity="0.14989427196541358"/><rect x="698.39" y="797" width="1" height="32" fill="#3c0f4c" fill-opacity="0.2673533391616322"/><rect x="1667.61" y="797" width="1" height="32" fill="#3c0f4c" fill-opacity="0.25175883667994103"/><rect x="1687.3" y="797" width="1" height="32" fill="#3c0f4c" fill-opacity="0.15355397000929216"/><rect x="959.98" y="797" width="1" height="32" fill="#3c0f4c" fill-opacity="0.3328649516808409"/><rect x="762.88" y="797" width="1" height="96" fill="#3c0f4c" fill-opacity="0.293317838125729"/><rect x="1534.73" y="797" width="1" height="32" fill="#3c0f4c" fill-opacity="0.1893715169960974"/><rect x="1585.72" y="797" width="1" height="32" fill="#3c0f4c" fill-opacity="0.3443757140632248"/><rect x="1185.25" y="797" width="1" height="32" fill="#3c0f4c" fill-opacity="0.25975828418894553"/><rect x="1358.78" y="797" width="1" height="32" fill="#3c0f4c" fill-opacity="0.3279707948403907"/><rect x="1340.68" y="797" width="1" height="32" fill="#3c0f4c" fill-opacity="0.26727461822882204"/><rect x="1607.52" y="797" width="1" height="96" fill="#3c0f4c" fill-opacity="0.2613876942147375"/><rect x="861.51" y="829" width="1" height="96" fill="#3c0f4c" fill-opacity="0.16208207502997124"/><rect x="886.39" y="829" width="1" height="96" fill="#3c0f4c" fill-opacity="0.3358662822031623"/><rect x="816.74" y="829" width="1" height="64" fill="#3c0f4c" fill-opacity="0.14830304178876758"/><rect x="919.05" y="829" width="1" height="32" fill="#3c0f4c" fill-opacity="0.12945277767843288"/><rect x="1275.17" y="829" width="1" height="32" fill="#3c0f4c" fill-opacity="0.2736161779819949"/><rect x="1006.19" y="829" width="1" height="96" fill="#3c0f4c" fill-opacity="0.25788954716040713"/><rect x="1261.28" y="829" width="1" height="64" fill="#3c0f4c" fill-opacity="0.2692764071868101"/><rect x="988.13" y="829" width="1" height="32" fill="#3c0f4c" fill-opacity="0.21792016379176654"/><rect x="1384.16" y="829" width="1" height="96" fill="#3c0f4c" fill-opacity="0.23582303152100065"/><rect x="841.91" y="829" width="1" height="32" fill="#3c0f4c" fill-opacity="0.2623451323569689"/><rect x="1192.89" y="829" width="1" height="32" fill="#3c0f4c" fill-opacity="0.22276834045067423"/><rect x="1338.68" y="829" width="1" height="96" fill="#3c0f4c" fill-opacity="0.31240538411811647"/><rect x="1555.49" y="829" width="1" height="96" fill="#3c0f4c" fill-opacity="0.14462749649165385"/><rect x="785.09" y="829" width="1" height="96" fill="#3c0f4c" fill-opacity="0.2040264321200104"/><rect x="1546.18" y="829" width="1" height="32" fill="#3c0f4c" fill-opacity="0.12934987527415537"/><rect x="787.14" y="829" width="1" height="64" fill="#3c0f4c" fill-opacity="0.2988562998599596"/><rect x="1217.72" y="829" width="1" height="32" fill="#3c0f4c" fill-opacity="0.2929735429279695"/><rect x="1650.75" y="829" width="1" height="32" fill="#3c0f4c" fill-opacity="0.1259469918692568"/><rect x="714.98" y="829" width="1" height="32" fill="#3c0f4c" fill-opacity="0.16455267973446858"/><rect x="1748.86" y="829" width="1" height="96" fill="#3c0f4c" fill-opacity="0.1862127674373018"/><rect x="1556.02" y="829" width="1" height="32" fill="#3c0f4c" fill-opacity="0.2778108100692015"/><rect x="1454.46" y="829" width="1" height="32" fill="#3c0f4c" fill-opacity="0.1350687282651536"/><rect x="1036.34" y="829" width="1" height="64" fill="#3c0f4c" fill-opacity="0.15651651333632297"/><rect x="1652.64" y="829" width="1" height="64" fill="#3c0f4c" fill-opacity="0.3281643053710023"/><rect x="1155.51" y="829" width="1" height="64" fill="#3c0f4c" fill-opacity="0.23551012465205334"/><rect x="1679.04" y="829" width="1" height="32" fill="#3c0f4c" fill-opacity="0.2561341863159803"/><rect x="1335.62" y="829" width="1" height="32" fill="#3c0f4c" fill-opacity="0.19338782888368813"/><rect x="681.6" y="829" width="1" height="32" fill="#3c0f4c" fill-opacity="0.21279705373259444"/><rect x="1359.01" y="829" width="1" height="64" fill="#3c0f4c" fill-opacity="0.27632638965099743"/><rect x="1651.37" y="829" width="1" height="32" fill="#3c0f4c" fill-opacity="0.3021885563471909"/><rect x="938.57" y="829" width="1" height="32" fill="#3c0f4c" fill-opacity="0.26635329527710716"/><rect x="1046.37" y="829" width="1" height="96" fill="#3c0f4c" fill-opacity="0.24769142791579718"/><rect x="1295.16" y="829" width="1" height="32" fill="#3c0f4c" fill-opacity="0.1779672667263415"/><rect x="1245.07" y="829" width="1" height="96" fill="#3c0f4c" fill-opacity="0.2897223179300445"/><rect x="1059.57" y="829" width="1" height="96" fill="#3c0f4c" fill-opacity="0.3478145969275923"/><rect x="1292.13" y="829" width="1" height="64" fill="#3c0f4c" fill-opacity="0.19609063577552893"/><rect x="731.92" y="829" width="1" height="32" fill="#3c0f4c" fill-opacity="0.1606538935120101"/><rect x="1479.89" y="829" width="1" height="32" fill="#3c0f4c" fill-opacity="0.18816818243682076"/><rect x="1222.94" y="829" width="1" height="64" fill="#3c0f4c" fill-opacity="0.2670247039360565"/><rect x="1751.49" y="829" width="1" height="64" fill="#3c0f4c" fill-opacity="0.28859891839632335"/><rect x="1483.87" y="829" width="1" height="32" fill="#3c0f4c" fill-opacity="0.1543538940468689"/><rect x="1335.83" y="829" width="1" height="96" fill="#3c0f4c" fill-opacity="0.21606800204452825"/><rect x="1051.25" y="829" width="1" height="32" fill="#3c0f4c" fill-opacity="0.15036535749085794"/><rect x="896.69" y="829" width="1" height="32" fill="#3c0f4c" fill-opacity="0.12512659015141722"/><rect x="642.95" y="829" width="1" height="64" fill="#3c0f4c" fill-opacity="0.18985991965579543"/><rect x="1230.83" y="829" width="1" height="32" fill="#3c0f4c" fill-opacity="0.21504484641720284"/><rect x="980.15" y="829" width="1" height="32" fill="#3c0f4c" fill-opacity="0.16696240532572523"/><rect x="1344.73" y="829" width="1" height="96" fill="#3c0f4c" fill-opacity="0.15648339018964916"/><rect x="655.94" y="829" width="1" height="32" fill="#3c0f4c" fill-opacity="0.2827187016929835"/><rect x="1149.24" y="829" width="1" height="32" fill="#3c0f4c" fill-opacity="0.26678832220494053"/><rect x="1624.12" y="829" width="1" height="64" fill="#3c0f4c" fill-opacity="0.21244916496173455"/><rect x="938.46" y="829" width="1" height="32" fill="#3c0f4c" fill-opacity="0.13291002950324035"/><rect x="1567.18" y="829" width="1" height="64" fill="#3c0f4c" fill-opacity="0.25678658096856577"/><rect x="1293.38" y="829" width="1" height="96" fill="#3c0f4c" fill-opacity="0.17715431413034205"/><rect x="1660.51" y="829" width="1" height="32" fill="#3c0f4c" fill-opacity="0.13415155852028207"/><rect x="668.49" y="829" width="1" height="32" fill="#3c0f4c" fill-opacity="0.17466382538243994"/><rect x="705.94" y="829" width="1" height="32" fill="#3c0f4c" fill-opacity="0.12284052171488927"/><rect x="1262.27" y="829" width="1" height="32" fill="#3c0f4c" fill-opacity="0.15272130530350655"/><rect x="865.36" y="829" width="1" height="96" fill="#3c0f4c" fill-opacity="0.30707758509391725"/><rect x="837.26" y="829" width="1" height="64" fill="#3c0f4c" fill-opacity="0.13466645359293533"/><rect x="1347.03" y="829" width="1" height="96" fill="#3c0f4c" fill-opacity="0.28454168113942035"/><rect x="647.17" y="829" width="1" height="96" fill="#3c0f4c" fill-opacity="0.291393112538902"/><rect x="1165.52" y="829" width="1" height="96" fill="#3c0f4c" fill-opacity="0.16034009741222957"/><rect x="1765.67" y="829" width="1" height="64" fill="#3c0f4c" fill-opacity="0.1734282381692867"/><rect x="683.84" y="829" width="1" height="64" fill="#3c0f4c" fill-opacity="0.32499300362482986"/><rect x="1684.99" y="829" width="1" height="64" fill="#3c0f4c" fill-opacity="0.2836873722976637"/><rect x="940.43" y="829" width="1" height="96" fill="#3c0f4c" fill-opacity="0.27771875196206197"/><rect x="1676.06" y="829" width="1" height="64" fill="#3c0f4c" fill-opacity="0.1879919075046534"/><rect x="1688.82" y="829" width="1" height="32" fill="#3c0f4c" fill-opacity="0.13964685628123874"/><rect x="1213.14" y="829" width="1" height="32" fill="#3c0f4c" fill-opacity="0.17988478994430288"/><rect x="906.69" y="829" width="1" height="32" fill="#3c0f4c" fill-opacity="0.33728051592866215"/><rect x="1482.78" y="829" width="1" height="64" fill="#3c0f4c" fill-opacity="0.1641455045524083"/><rect x="1079.04" y="829" width="1" height="32" fill="#3c0f4c" fill-opacity="0.20727325498119537"/><rect x="1602.25" y="829" width="1" height="96" fill="#3c0f4c" fill-opacity="0.22859231951187245"/><rect x="1239.33" y="829" width="1" height="32" fill="#3c0f4c" fill-opacity="0.31723023389353494"/><rect x="1133.83" y="829" width="1" height="32" fill="#3c0f4c" fill-opacity="0.25117830949645115"/><rect x="987.6" y="829" width="1" height="32" fill="#3c0f4c" fill-opacity="0.21005950267019174"/><rect x="1301.13" y="829" width="1" height="32" fill="#3c0f4c" fill-opacity="0.15325683055497802"/><rect x="670.39" y="829" width="1" height="32" fill="#3c0f4c" fill-opacity="0.26305290746434207"/><rect x="822.77" y="829" width="1" height="32" fill="#3c0f4c" fill-opacity="0.2811701576904096"/><rect x="674.87" y="829" width="1" height="32" fill="#3c0f4c" fill-opacity="0.27930379933130206"/><rect x="1355.97" y="829" width="1" height="32" fill="#3c0f4c" fill-opacity="0.28946061052932204"/><rect x="714.28" y="829" width="1" height="64" fill="#3c0f4c" fill-opacity="0.16584180457919218"/><rect x="1718.19" y="829" width="1" height="32" fill="#3c0f4c" fill-opacity="0.32233435965770646"/><rect x="1493.65" y="829" width="1" height="96" fill="#3c0f4c" fill-opacity="0.14463665445680024"/><rect x="872.36" y="829" width="1" height="32" fill="#3c0f4c" fill-opacity="0.12778794354139392"/><rect x="1712.18" y="829" width="1" height="32" fill="#3c0f4c" fill-opacity="0.30976386184117255"/><rect x="1353.32" y="829" width="1" height="64" fill="#3c0f4c" fill-opacity="0.22973652849325335"/><rect x="789.83" y="829" width="1" height="32" fill="#3c0f4c" fill-opacity="0.18772566142232672"/><rect x="1020.09" y="829" width="1" height="64" fill="#3c0f4c" fill-opacity="0.12481124610235679"/><rect x="929.95" y="829" width="1" height="64" fill="#3c0f4c" fill-opacity="0.13113384846318737"/><rect x="1498.25" y="829" width="1" height="64" fill="#3c0f4c" fill-opacity="0.2969246257224665"/><rect x="1319.97" y="829" width="1" height="96" fill="#3c0f4c" fill-opacity="0.31581678484498865"/><rect x="1338.34" y="829" width="1" height="32" fill="#3c0f4c" fill-opacity="0.3014828471464799"/><rect x="675.29" y="829" width="1" height="32" fill="#3c0f4c" fill-opacity="0.19975978343081907"/><rect x="1435.91" y="829" width="1" height="32" fill="#3c0f4c" fill-opacity="0.2843097174042094"/><rect x="1575.03" y="829" width="1" height="64" fill="#3c0f4c" fill-opacity="0.1591853898040445"/><rect x="641.47" y="829" width="1" height="32" fill="#3c0f4c" fill-opacity="0.18631697315947437"/><rect x="1487.71" y="829" width="1" height="32" fill="#3c0f4c" fill-opacity="0.12100318394597502"/><rect x="1194.38" y="829" width="1" height="96" fill="#3c0f4c" fill-opacity="0.2798978272323126"/><rect x="1572.22" y="829" width="1" height="96" fill="#3c0f4c" fill-opacity="0.2562876132119648"/><rect x="1721.16" y="829" width="1" height="64" fill="#3c0f4c" fill-opacity="0.2529417001984274"/><rect x="819.47" y="829" width="1" height="32" fill="#3c0f4c" fill-opacity="0.3358065229719892"/><rect x="901.51" y="829" width="1" height="32" fill="#3c0f4c" fill-opacity="0.14528234590518177"/><rect x="1358.96" y="829" width="1" height="32" fill="#3c0f4c" fill-opacity="0.2327670922966319"/><rect x="1759.46" y="829" width="1" height="32" fill="#3c0f4c" fill-opacity="0.26442440617925056"/><rect x="1041.67" y="829" width="1" height="96" fill="#3c0f4c" fill-opacity="0.33355605550675"/><rect x="1647.34" y="829" width="1" height="32" fill="#3c0f4c" fill-opacity="0.21708989891665592"/><rect x="1369.5" y="829" width="1" height="64" fill="#3c0f4c" fill-opacity="0.16740686006637243"/><rect x="937.28" y="829" width="1" height="32" fill="#3c0f4c" fill-opacity="0.20724018369581007"/><rect x="1638.45" y="861" width="1" height="32" fill="#3c0f4c" fill-opacity="0.3371016199589434"/><rect x="783.31" y="861" width="1" height="32" fill="#3c0f4c" fill-opacity="0.20015165220024916"/><rect x="1008.96" y="861" width="1" height="32" fill="#3c0f4c" fill-opacity="0.3196395920508682"/><rect x="1148.62" y="861" width="1" height="64" fill="#3c0f4c" fill-opacity="0.1589966228345494"/><rect x="1135.62" y="861" width="1" height="64" fill="#3c0f4c" fill-opacity="0.25320904637229164"/><rect x="782.38" y="861" width="1" height="96" fill="#3c0f4c" fill-opacity="0.2678212143747424"/><rect x="1426.77" y="861" width="1" height="32" fill="#3c0f4c" fill-opacity="0.18152103989829693"/><rect x="1492.47" y="861" width="1" height="32" fill="#3c0f4c" fill-opacity="0.2863673016866797"/><rect x="1741" y="861" width="1" height="64" fill="#3c0f4c" fill-opacity="0.2586658729620361"/><rect x="1033.78" y="861" width="1" height="32" fill="#3c0f4c" fill-opacity="0.19545726686591236"/><rect x="853.78" y="861" width="1" height="32" fill="#3c0f4c" fill-opacity="0.15785835118106537"/><rect x="1383.1" y="861" width="1" height="32" fill="#3c0f4c" fill-opacity="0.20837356578350677"/><rect x="1751.24" y="861" width="1" height="64" fill="#3c0f4c" fill-opacity="0.2886572972566114"/><rect x="1131.25" y="861" width="1" height="32" fill="#3c0f4c" fill-opacity="0.1451341863478392"/><rect x="1669.43" y="861" width="1" height="64" fill="#3c0f4c" fill-opacity="0.16748211185341377"/><rect x="1078.63" y="861" width="1" height="32" fill="#3c0f4c" fill-opacity="0.12290197910200698"/><rect x="1604.96" y="861" width="1" height="96" fill="#3c0f4c" fill-opacity="0.27949105077359077"/><rect x="1205.3" y="861" width="1" height="64" fill="#3c0f4c" fill-opacity="0.2265542269132061"/><rect x="800.18" y="861" width="1" height="96" fill="#3c0f4c" fill-opacity="0.12126906171752162"/><rect x="913.66" y="861" width="1" height="96" fill="#3c0f4c" fill-opacity="0.28126724110554857"/><rect x="1303.5" y="861" width="1" height="96" fill="#3c0f4c" fill-opacity="0.3145785165769596"/><rect x="1394.39" y="861" width="1" height="32" fill="#3c0f4c" fill-opacity="0.27630720013190907"/><rect x="1364.62" y="861" width="1" height="96" fill="#3c0f4c" fill-opacity="0.21948163510854007"/><rect x="933.45" y="861" width="1" height="32" fill="#3c0f4c" fill-opacity="0.3257911724336705"/><rect x="913.79" y="861" width="1" height="96" fill="#3c0f4c" fill-opacity="0.28402460965444265"/><rect x="1351.15" y="861" width="1" height="64" fill="#3c0f4c" fill-opacity="0.3153715351031971"/><rect x="1185.26" y="861" width="1" height="32" fill="#3c0f4c" fill-opacity="0.26296081839102226"/><rect x="1102.35" y="861" width="1" height="32" fill="#3c0f4c" fill-opacity="0.3257337164173471"/><rect x="1010.54" y="861" width="1" height="32" fill="#3c0f4c" fill-opacity="0.20940293804802318"/><rect x="1193.27" y="861" width="1" height="32" fill="#3c0f4c" fill-opacity="0.12877347169653558"/><rect x="1253.73" y="861" width="1" height="32" fill="#3c0f4c" fill-opacity="0.28472969800093834"/><rect x="1714.52" y="861" width="1" height="32" fill="#3c0f4c" fill-opacity="0.23942059420114548"/><rect x="754.18" y="861" width="1" height="96" fill="#3c0f4c" fill-opacity="0.24443812323470293"/><rect x="1450.19" y="861" width="1" height="32" fill="#3c0f4c" fill-opacity="0.2670300964436707"/><rect x="1576.34" y="861" width="1" height="64" fill="#3c0f4c" fill-opacity="0.21438018993053795"/><rect x="1710.74" y="861" width="1" height="32" fill="#3c0f4c" fill-opacity="0.3477639338925694"/><rect x="847.61" y="861" width="1" height="32" fill="#3c0f4c" fill-opacity="0.2876944917174259"/><rect x="1333.52" y="861" width="1" height="32" fill="#3c0f4c" fill-opacity="0.17806527505146086"/><rect x="1071.28" y="861" width="1" height="32" fill="#3c0f4c" fill-opacity="0.12306091805765434"/><rect x="1112.79" y="861" width="1" height="96" fill="#3c0f4c" fill-opacity="0.26456989773063455"/><rect x="1402.28" y="861" width="1" height="64" fill="#3c0f4c" fill-opacity="0.14512944915606288"/><rect x="982.8" y="861" width="1" height="96" fill="#3c0f4c" fill-opacity="0.33618421509359503"/><rect x="1235.33" y="861" width="1" height="32" fill="#3c0f4c" fill-opacity="0.34867295842127566"/><rect x="1725.28" y="861" width="1" height="96" fill="#3c0f4c" fill-opacity="0.16876293858768543"/><rect x="786.04" y="861" width="1" height="32" fill="#3c0f4c" fill-opacity="0.30620165477417793"/><rect x="1356.44" y="861" width="1" height="96" fill="#3c0f4c" fill-opacity="0.2677058348750502"/><rect x="1454.04" y="861" width="1" height="32" fill="#3c0f4c" fill-opacity="0.20122029478243508"/><rect x="1361.52" y="861" width="1" height="96" fill="#3c0f4c" fill-opacity="0.22766320309871363"/><rect x="972.46" y="861" width="1" height="32" fill="#3c0f4c" fill-opacity="0.2993647385519834"/><rect x="1170.19" y="861" width="1" height="32" fill="#3c0f4c" fill-opacity="0.18150763140593523"/><rect x="1064.86" y="861" width="1" height="64" fill="#3c0f4c" fill-opacity="0.34606494462493076"/><rect x="1406.73" y="861" width="1" height="96" fill="#3c0f4c" fill-opacity="0.12061986204423315"/><rect x="1455.26" y="861" width="1" height="64" fill="#3c0f4c" fill-opacity="0.2023348070408587"/><rect x="1379.15" y="861" width="1" height="64" fill="#3c0f4c" fill-opacity="0.23029651374765797"/><rect x="1123.98" y="861" width="1" height="32" fill="#3c0f4c" fill-opacity="0.2716308188163722"/><rect x="1049.37" y="861" width="1" height="64" fill="#3c0f4c" fill-opacity="0.3165224558753927"/><rect x="704.45" y="861" width="1" height="64" fill="#3c0f4c" fill-opacity="0.3003288392484256"/><rect x="798.58" y="861" width="1" height="64" fill="#3c0f4c" fill-opacity="0.2656273345199579"/><rect x="656.93" y="861" width="1" height="32" fill="#3c0f4c" fill-opacity="0.16824237919529356"/><rect x="721.32" y="861" width="1" height="64" fill="#3c0f4c" fill-opacity="0.1775061084321598"/><rect x="754.66" y="861" width="1" height="32" fill="#3c0f4c" fill-opacity="0.3164599833915943"/><rect x="849.71" y="861" width="1" height="96" fill="#3c0f4c" fill-opacity="0.19968213752302222"/><rect x="812.44" y="861" width="1" height="96" fill="#3c0f4c" fill-opacity="0.3020851004342734"/><rect x="829.66" y="861" width="1" height="32" fill="#3c0f4c" fill-opacity="0.27374532265497603"/><rect x="1649.67" y="861" width="1" height="64" fill="#3c0f4c" fill-opacity="0.1653952174166304"/><rect x="1422.51" y="861" width="1" height="32" fill="#3c0f4c" fill-opacity="0.29063974598820674"/><rect x="1135.38" y="861" width="1" height="32" fill="#3c0f4c" fill-opacity="0.24766467226473382"/><rect x="938.75" y="861" width="1" height="32" fill="#3c0f4c" fill-opacity="0.3102223914269194"/><rect x="1174.53" y="861" width="1" height="32" fill="#3c0f4c" fill-opacity="0.2314052448975418"/><rect x="1662.72" y="861" width="1" height="96" fill="#3c0f4c" fill-opacity="0.17671032081976829"/><rect x="825.93" y="861" width="1" height="32" fill="#3c0f4c" fill-opacity="0.1568822036190072"/><rect x="1002.21" y="861" width="1" height="96" fill="#3c0f4c" fill-opacity="0.2730191248526276"/><rect x="1589.42" y="861" width="1" height="64" fill="#3c0f4c" fill-opacity="0.21793725219613214"/><rect x="1769.44" y="861" width="1" height="32" fill="#3c0f4c" fill-opacity="0.16151936416714943"/><rect x="1047.04" y="861" width="1" height="32" fill="#3c0f4c" fill-opacity="0.12472874708641564"/><rect x="691.81" y="861" width="1" height="64" fill="#3c0f4c" fill-opacity="0.30597790424372184"/><rect x="746.15" y="861" width="1" height="96" fill="#3c0f4c" fill-opacity="0.23147537756077574"/><rect x="1653.8" y="861" width="1" height="32" fill="#3c0f4c" fill-opacity="0.16907321859286983"/><rect x="1109.41" y="861" width="1" height="32" fill="#3c0f4c" fill-opacity="0.19787950695847734"/><rect x="1613.28" y="861" width="1" height="64" fill="#3c0f4c" fill-opacity="0.19850162341552008"/><rect x="1519.34" y="861" width="1" height="32" fill="#3c0f4c" fill-opacity="0.18535474337707153"/><rect x="1026.24" y="861" width="1" height="64" fill="#3c0f4c" fill-opacity="0.24742635028157878"/><rect x="1573.79" y="861" width="1" height="64" fill="#3c0f4c" fill-opacity="0.20169105932398762"/><rect x="1197.67" y="861" width="1" height="64" fill="#3c0f4c" fill-opacity="0.23586231065084004"/><rect x="946.88" y="861" width="1" height="64" fill="#3c0f4c" fill-opacity="0.3442489776522833"/><rect x="1379.32" y="861" width="1" height="32" fill="#3c0f4c" fill-opacity="0.19610614146464328"/><rect x="998.16" y="861" width="1" height="64" fill="#3c0f4c" fill-opacity="0.149341261125235"/><rect x="1738.72" y="861" width="1" height="32" fill="#3c0f4c" fill-opacity="0.30036957755084387"/><rect x="685.24" y="861" width="1" height="96" fill="#3c0f4c" fill-opacity="0.24544225657008684"/><rect x="696.14" y="861" width="1" height="64" fill="#3c0f4c" fill-opacity="0.14495511741510372"/><rect x="692.41" y="861" width="1" height="96" fill="#3c0f4c" fill-opacity="0.2599976922286771"/><rect x="1383.23" y="861" width="1" height="96" fill="#3c0f4c" fill-opacity="0.2618408034281572"/><rect x="1347.99" y="861" width="1" height="32" fill="#3c0f4c" fill-opacity="0.16887532017438903"/><rect x="1393.38" y="861" width="1" height="96" fill="#3c0f4c" fill-opacity="0.2638138615743457"/><rect x="836.42" y="861" width="1" height="32" fill="#3c0f4c" fill-opacity="0.31991734496135155"/><rect x="1116.16" y="861" width="1" height="32" fill="#3c0f4c" fill-opacity="0.3302390582413821"/><rect x="1380.63" y="861" width="1" height="64" fill="#3c0f4c" fill-opacity="0.32054207711816174"/><rect x="796.66" y="861" width="1" height="64" fill="#3c0f4c" fill-opacity="0.249283337245364"/><rect x="931.41" y="861" width="1" height="64" fill="#3c0f4c" fill-opacity="0.16249855456509055"/><rect x="678.68" y="861" width="1" height="32" fill="#3c0f4c" fill-opacity="0.21905526466858766"/><rect x="1364.87" y="861" width="1" height="32" fill="#3c0f4c" fill-opacity="0.23448596746121864"/><rect x="1229.77" y="861" width="1" height="32" fill="#3c0f4c" fill-opacity="0.2979687458006763"/><rect x="1115.6" y="861" width="1" height="96" fill="#3c0f4c" fill-opacity="0.22268848907545458"/><rect x="655.96" y="861" width="1" height="96" fill="#3c0f4c" fill-opacity="0.25658842657620673"/><rect x="1761.74" y="861" width="1" height="32" fill="#3c0f4c" fill-opacity="0.22935313498283866"/><rect x="1105.83" y="861" width="1" height="32" fill="#3c0f4c" fill-opacity="0.1390726892518724"/><rect x="1173.34" y="861" width="1" height="32" fill="#3c0f4c" fill-opacity="0.2641858472941213"/><rect x="1122.3" y="861" width="1" height="32" fill="#3c0f4c" fill-opacity="0.2772650484290289"/><rect x="777.43" y="861" width="1" height="32" fill="#3c0f4c" fill-opacity="0.17019639767703637"/><rect x="777.06" y="861" width="1" height="96" fill="#3c0f4c" fill-opacity="0.1240887266647261"/><rect x="1452.51" y="861" width="1" height="32" fill="#3c0f4c" fill-opacity="0.22367863624332998"/><rect x="1480.58" y="861" width="1" height="32" fill="#3c0f4c" fill-opacity="0.2041509476156928"/><rect x="1484.01" y="861" width="1" height="32" fill="#3c0f4c" fill-opacity="0.28783600833006334"/><rect x="735.21" y="861" width="1" height="96" fill="#3c0f4c" fill-opacity="0.22593333575125402"/><rect x="1693.09" y="861" width="1" height="64" fill="#3c0f4c" fill-opacity="0.33010986232603"/><rect x="699.48" y="861" width="1" height="32" fill="#3c0f4c" fill-opacity="0.12262222270612955"/><rect x="656.64" y="861" width="1" height="32" fill="#3c0f4c" fill-opacity="0.2094581984098583"/><rect x="992.96" y="861" width="1" height="32" fill="#3c0f4c" fill-opacity="0.3402708162220011"/><rect x="1583.04" y="861" width="1" height="32" fill="#3c0f4c" fill-opacity="0.19274428408250271"/><rect x="1711.62" y="861" width="1" height="96" fill="#3c0f4c" fill-opacity="0.22805446964265608"/><rect x="828.03" y="861" width="1" height="32" fill="#3c0f4c" fill-opacity="0.20355108707692687"/><rect x="1368.4" y="861" width="1" height="96" fill="#3c0f4c" fill-opacity="0.2297013155275555"/><rect x="1518.86" y="861" width="1" height="96" fill="#3c0f4c" fill-opacity="0.33733204679605044"/><rect x="1526.23" y="861" width="1" height="64" fill="#3c0f4c" fill-opacity="0.1872493072180348"/><rect x="708.49" y="861" width="1" height="64" fill="#3c0f4c" fill-opacity="0.31999838880702325"/><rect x="1459.69" y="861" width="1" height="32" fill="#3c0f4c" fill-opacity="0.3111963264998622"/><rect x="1318.98" y="861" width="1" height="64" fill="#3c0f4c" fill-opacity="0.2544736945522519"/><rect x="1742.83" y="861" width="1" height="32" fill="#3c0f4c" fill-opacity="0.20663567616859116"/><rect x="1413.51" y="861" width="1" height="32" fill="#3c0f4c" fill-opacity="0.305720731495261"/><rect x="960" y="861" width="1" height="32" fill="#3c0f4c" fill-opacity="0.1939509526677448"/><rect x="942.73" y="893" width="1" height="32" fill="#3c0f4c" fill-opacity="0.25492789396447785"/><rect x="1561.66" y="893" width="1" height="32" fill="#3c0f4c" fill-opacity="0.18635993236037435"/><rect x="798.89" y="893" width="1" height="32" fill="#3c0f4c" fill-opacity="0.18298519696544985"/><rect x="1601.41" y="893" width="1" height="96" fill="#3c0f4c" fill-opacity="0.19977624642065311"/><rect x="736.08" y="893" width="1" height="96" fill="#3c0f4c" fill-opacity="0.30339937312751775"/><rect x="866.39" y="893" width="1" height="32" fill="#3c0f4c" fill-opacity="0.19117818966199895"/><rect x="705.01" y="893" width="1" height="96" fill="#3c0f4c" fill-opacity="0.2270242726275179"/><rect x="873.34" y="893" width="1" height="64" fill="#3c0f4c" fill-opacity="0.25486931825250925"/><rect x="650.58" y="893" width="1" height="96" fill="#3c0f4c" fill-opacity="0.2257350150073263"/><rect x="739.06" y="893" width="1" height="64" fill="#3c0f4c" fill-opacity="0.2975982432395606"/><rect x="903.02" y="893" width="1" height="64" fill="#3c0f4c" fill-opacity="0.3235716184352744"/><rect x="1229.44" y="893" width="1" height="96" fill="#3c0f4c" fill-opacity="0.23641879704256047"/><rect x="868.01" y="893" width="1" height="32" fill="#3c0f4c" fill-opacity="0.16423222848179428"/><rect x="844.09" y="893" width="1" height="64" fill="#3c0f4c" fill-opacity="0.20344992721758173"/><rect x="1277.52" y="893" width="1" height="96" fill="#3c0f4c" fill-opacity="0.2993168676567077"/><rect x="1607.93" y="893" width="1" height="32" fill="#3c0f4c" fill-opacity="0.13025672549159953"/><rect x="1766.27" y="893" width="1" height="64" fill="#3c0f4c" fill-opacity="0.31926551658218505"/><rect x="1059.8" y="893" width="1" height="96" fill="#3c0f4c" fill-opacity="0.30108993611335805"/><rect x="816.38" y="893" width="1" height="32" fill="#3c0f4c" fill-opacity="0.19933198134993058"/><rect x="1226.73" y="893" width="1" height="32" fill="#3c0f4c" fill-opacity="0.14163949532600628"/><rect x="871.15" y="893" width="1" height="96" fill="#3c0f4c" fill-opacity="0.25494352169671886"/><rect x="881.24" y="893" width="1" height="64" fill="#3c0f4c" fill-opacity="0.21796849632512616"/><rect x="1709.07" y="893" width="1" height="32" fill="#3c0f4c" fill-opacity="0.17841897341655003"/><rect x="682.77" y="893" width="1" height="32" fill="#3c0f4c" fill-opacity="0.3487612985936488"/><rect x="1067.18" y="893" width="1" height="32" fill="#3c0f4c" fill-opacity="0.13172942577307162"/><rect x="1269.56" y="893" width="1" height="96" fill="#3c0f4c" fill-opacity="0.23197215853525072"/><rect x="1595.11" y="893" width="1" height="32" fill="#3c0f4c" fill-opacity="0.3184831546064889"/><rect x="1362.7" y="893" width="1" height="32" fill="#3c0f4c" fill-opacity="0.2824665641832219"/><rect x="741.61" y="893" width="1" height="64" fill="#3c0f4c" fill-opacity="0.2498295211317972"/><rect x="1363.59" y="893" width="1" height="96" fill="#3c0f4c" fill-opacity="0.16201416524588308"/><rect x="1599.73" y="893" width="1" height="64" fill="#3c0f4c" fill-opacity="0.3421267522430388"/><rect x="1760.14" y="893" width="1" height="32" fill="#3c0f4c" fill-opacity="0.15958851627174975"/><rect x="1703.67" y="893" width="1" height="64" fill="#3c0f4c" fill-opacity="0.13363365968788815"/><rect x="1264.43" y="893" width="1" height="32" fill="#3c0f4c" fill-opacity="0.3125601179256685"/><rect x="693.13" y="893" width="1" height="96" fill="#3c0f4c" fill-opacity="0.13282659689518106"/><rect x="803.55" y="893" width="1" height="32" fill="#3c0f4c" fill-opacity="0.336057528300277"/><rect x="1404.55" y="893" width="1" height="64" fill="#3c0f4c" fill-opacity="0.2556507057401316"/><rect x="1138.43" y="893" width="1" height="32" fill="#3c0f4c" fill-opacity="0.22826683621481977"/><rect x="1059.82" y="893" width="1" height="96" fill="#3c0f4c" fill-opacity="0.14855302018110544"/><rect x="1183.64" y="893" width="1" height="32" fill="#3c0f4c" fill-opacity="0.22151851121220895"/><rect x="1552.13" y="893" width="1" height="32" fill="#3c0f4c" fill-opacity="0.2276165883612792"/><rect x="1670.77" y="893" width="1" height="32" fill="#3c0f4c" fill-opacity="0.15609991977636628"/><rect x="1580.69" y="893" width="1" height="32" fill="#3c0f4c" fill-opacity="0.3348146563193971"/><rect x="1619" y="893" width="1" height="32" fill="#3c0f4c" fill-opacity="0.2990124799524724"/><rect x="1722.01" y="893" width="1" height="96" fill="#3c0f4c" fill-opacity="0.31371734168379983"/><rect x="1349.74" y="893" width="1" height="96" fill="#3c0f4c" fill-opacity="0.3436315917085795"/><rect x="1004.34" y="893" width="1" height="32" fill="#3c0f4c" fill-opacity="0.22983380635522593"/><rect x="1349.53" y="893" width="1" height="32" fill="#3c0f4c" fill-opacity="0.19635518730416673"/><rect x="1471.38" y="893" width="1" height="32" fill="#3c0f4c" fill-opacity="0.2841566172526543"/><rect x="1265.04" y="893" width="1" height="32" fill="#3c0f4c" fill-opacity="0.2209633361568028"/><rect x="808.74" y="893" width="1" height="96" fill="#3c0f4c" fill-opacity="0.21470978421534676"/><rect x="815.85" y="893" width="1" height="64" fill="#3c0f4c" fill-opacity="0.2513277811042932"/><rect x="974.95" y="893" width="1" height="32" fill="#3c0f4c" fill-opacity="0.1799545923838883"/><rect x="763.38" y="893" width="1" height="96" fill="#3c0f4c" fill-opacity="0.32772869230032226"/><rect x="768.95" y="893" width="1" height="32" fill="#3c0f4c" fill-opacity="0.26513017398013655"/><rect x="1529.6" y="893" width="1" height="32" fill="#3c0f4c" fill-opacity="0.24878677211563832"/><rect x="1583.45" y="893" width="1" height="32" fill="#3c0f4c" fill-opacity="0.1792924225599743"/><rect x="867.73" y="893" width="1" height="64" fill="#3c0f4c" fill-opacity="0.2193736824984462"/><rect x="935.39" y="893" width="1" height="32" fill="#3c0f4c" fill-opacity="0.33276834759692864"/><rect x="750.2" y="893" width="1" height="64" fill="#3c0f4c" fill-opacity="0.21559627880249826"/><rect x="823.2" y="893" width="1" height="64" fill="#3c0f4c" fill-opacity="0.1532007689407853"/><rect x="1362.66" y="893" width="1" height="96" fill="#3c0f4c" fill-opacity="0.30561530714327284"/><rect x="1025.05" y="893" width="1" height="32" fill="#3c0f4c" fill-opacity="0.2218918944183163"/><rect x="1531.81" y="893" width="1" height="64" fill="#3c0f4c" fill-opacity="0.16273874419050527"/><rect x="1131.61" y="893" width="1" height="96" fill="#3c0f4c" fill-opacity="0.1702009309357022"/><rect x="1285.33" y="893" width="1" height="32" fill="#3c0f4c" fill-opacity="0.3139754323022803"/><rect x="1229.21" y="893" width="1" height="32" fill="#3c0f4c" fill-opacity="0.2836722068517977"/><rect x="862.19" y="893" width="1" height="32" fill="#3c0f4c" fill-opacity="0.31066330410619697"/><rect x="1644.49" y="893" width="1" height="96" fill="#3c0f4c" fill-opacity="0.2950943216904576"/><rect x="838.02" y="893" width="1" height="32" fill="#3c0f4c" fill-opacity="0.2608596634423501"/><rect x="1439.41" y="893" width="1" height="32" fill="#3c0f4c" fill-opacity="0.2540746130857632"/><rect x="868.49" y="893" width="1" height="32" fill="#3c0f4c" fill-opacity="0.27921588494274396"/><rect x="1226.85" y="893" width="1" height="32" fill="#3c0f4c" fill-opacity="0.23924561244583759"/><rect x="1032.66" y="893" width="1" height="64" fill="#3c0f4c" fill-opacity="0.31363881205776045"/><rect x="1616.46" y="893" width="1" height="96" fill="#3c0f4c" fill-opacity="0.14077589767837806"/><rect x="1102.55" y="893" width="1" height="96" fill="#3c0f4c" fill-opacity="0.15065484740259602"/><rect x="1391.66" y="893" width="1" height="32" fill="#3c0f4c" fill-opacity="0.16279199912785997"/><rect x="1579.32" y="893" width="1" height="64" fill="#3c0f4c" fill-opacity="0.128434286919253"/><rect x="1433.2" y="893" width="1" height="32" fill="#3c0f4c" fill-opacity="0.20191608287065688"/><rect x="1692.83" y="893" width="1" height="32" fill="#3c0f4c" fill-opacity="0.1477775495651751"/><rect x="1447.13" y="893" width="1" height="64" fill="#3c0f4c" fill-opacity="0.29919860157052336"/><rect x="1620.51" y="893" width="1" height="32" fill="#3c0f4c" fill-opacity="0.18705458291429855"/><rect x="761.63" y="893" width="1" height="96" fill="#3c0f4c" fill-opacity="0.22268093957053298"/><rect x="668.96" y="893" width="1" height="32" fill="#3c0f4c" fill-opacity="0.12475819525132845"/><rect x="1732.71" y="893" width="1" height="32" fill="#3c0f4c" fill-opacity="0.2623881894495381"/><rect x="829.62" y="893" width="1" height="64" fill="#3c0f4c" fill-opacity="0.17760535856882373"/><rect x="1562.98" y="893" width="1" height="32" fill="#3c0f4c" fill-opacity="0.12447376781842424"/><rect x="1686.27" y="893" width="1" height="32" fill="#3c0f4c" fill-opacity="0.18012643817117874"/><rect x="1585.77" y="893" width="1" height="96" fill="#3c0f4c" fill-opacity="0.24026959147173532"/><rect x="1433.64" y="893" width="1" height="32" fill="#3c0f4c" fill-opacity="0.20066094629459832"/><rect x="746.07" y="893" width="1" height="32" fill="#3c0f4c" fill-opacity="0.13038924308712038"/><rect x="778.98" y="893" width="1" height="96" fill="#3c0f4c" fill-opacity="0.25475747924427516"/><rect x="1500.13" y="893" width="1" height="32" fill="#3c0f4c" fill-opacity="0.1480685978230454"/><rect x="1098.18" y="893" width="1" height="32" fill="#3c0f4c" fill-opacity="0.2445674689569829"/><rect x="896.89" y="893" width="1" height="32" fill="#3c0f4c" fill-opacity="0.1538607229576885"/><rect x="1287.02" y="893" width="1" height="96" fill="#3c0f4c" fill-opacity="0.15779429896238972"/><rect x="1572.98" y="893" width="1" height="96" fill="#3c0f4c" fill-opacity="0.27958992434077956"/><rect x="1314.36" y="893" width="1" height="32" fill="#3c0f4c" fill-opacity="0.21099569896767367"/><rect x="1703.19" y="893" width="1" height="64" fill="#3c0f4c" fill-opacity="0.19786616855980876"/><rect x="911.51" y="893" width="1" height="64" fill="#3c0f4c" fill-opacity="0.28457156844574083"/><rect x="1592.2" y="893" width="1" height="64" fill="#3c0f4c" fill-opacity="0.30745993578535447"/><rect x="1597.4" y="893" width="1" height="32" fill="#3c0f4c" fill-opacity="0.19472234524038531"/><rect x="805.62" y="893" width="1" height="64" fill="#3c0f4c" fill-opacity="0.17733542241315708"/><rect x="1116.8" y="893" width="1" height="32" fill="#3c0f4c" fill-opacity="0.2038193532457639"/><rect x="1239.54" y="893" width="1" height="32" fill="#3c0f4c" fill-opacity="0.19460055716037244"/><rect x="866.79" y="893" width="1" height="32" fill="#3c0f4c" fill-opacity="0.17186004327284946"/><rect x="1115.21" y="893" width="1" height="96" fill="#3c0f4c" fill-opacity="0.2986133036719729"/><rect x="1698.27" y="893" width="1" height="32" fill="#3c0f4c" fill-opacity="0.30613177653732704"/><rect x="1638.9" y="893" width="1" height="32" fill="#3c0f4c" fill-opacity="0.12790594063020894"/><rect x="1364.66" y="893" width="1" height="64" fill="#3c0f4c" fill-opacity="0.3311237451139163"/><rect x="1344.21" y="893" width="1" height="32" fill="#3c0f4c" fill-opacity="0.2628892900281844"/><rect x="923.03" y="893" width="1" height="32" fill="#3c0f4c" fill-opacity="0.219748992654905"/><rect x="1714" y="893" width="1" height="64" fill="#3c0f4c" fill-opacity="0.14600008137706444"/><rect x="1032.56" y="893" width="1" height="32" fill="#3c0f4c" fill-opacity="0.14768768954186165"/><rect x="1311.25" y="893" width="1" height="64" fill="#3c0f4c" fill-opacity="0.13942903389987327"/><rect x="1306.69" y="893" width="1" height="32" fill="#3c0f4c" fill-opacity="0.22119474223629837"/><rect x="1217.89" y="893" width="1" height="64" fill="#3c0f4c" fill-opacity="0.33058527986336594"/><rect x="1292.11" y="893" width="1" height="64" fill="#3c0f4c" fill-opacity="0.17598215892362665"/><rect x="739.22" y="893" width="1" height="64" fill="#3c0f4c" fill-opacity="0.3131418614421227"/><rect x="1328.94" y="893" width="1" height="32" fill="#3c0f4c" fill-opacity="0.26958218961156777"/><rect x="867.25" y="893" width="1" height="64" fill="#3c0f4c" fill-opacity="0.22600318897602079"/><rect x="1259" y="893" width="1" height="96" fill="#3c0f4c" fill-opacity="0.22786208710319195"/><rect x="990.71" y="893" width="1" height="32" fill="#3c0f4c" fill-opacity="0.1967432790321375"/><rect x="853.25" y="893" width="1" height="96" fill="#3c0f4c" fill-opacity="0.34300933409264056"/><rect x="1087.8" y="893" width="1" height="64" fill="#3c0f4c" fill-opacity="0.15732773295215516"/><rect x="1715.37" y="893" width="1" height="64" fill="#3c0f4c" fill-opacity="0.248030235207527"/><rect x="1195.04" y="893" width="1" height="64" fill="#3c0f4c" fill-opacity="0.32202570019012255"/><rect x="884.13" y="893" width="1" height="32" fill="#3c0f4c" fill-opacity="0.2975895773247684"/><rect x="819.1" y="893" width="1" height="32" fill="#3c0f4c" fill-opacity="0.2593625786929784"/><rect x="1033.06" y="893" width="1" height="32" fill="#3c0f4c" fill-opacity="0.23890898897658325"/><rect x="1582.38" y="893" width="1" height="64" fill="#3c0f4c" fill-opacity="0.28914499130438653"/><rect x="763.39" y="893" width="1" height="32" fill="#3c0f4c" fill-opacity="0.3475405433821685"/><rect x="1405.42" y="893" width="1" height="32" fill="#3c0f4c" fill-opacity="0.2158529098891737"/><rect x="1394.78" y="893" width="1" height="32" fill="#3c0f4c" fill-opacity="0.2753291129810608"/><rect x="1336.11" y="893" width="1" height="64" fill="#3c0f4c" fill-opacity="0.30887453759433503"/><rect x="1224.82" y="893" width="1" height="96" fill="#3c0f4c" fill-opacity="0.18179700941247282"/><rect x="1352.34" y="893" width="1" height="32" fill="#3c0f4c" fill-opacity="0.21499777510978263"/><rect x="756.74" y="893" width="1" height="96" fill="#3c0f4c" fill-opacity="0.2961057960725401"/><rect x="1301.7" y="893" width="1" height="96" fill="#3c0f4c" fill-opacity="0.21142348700337674"/><rect x="1761.51" y="893" width="1" height="32" fill="#3c0f4c" fill-opacity="0.21611933108782558"/><rect x="1525.17" y="925" width="1" height="32" fill="#3c0f4c" fill-opacity="0.20729933467423634"/><rect x="1150.85" y="925" width="1" height="96" fill="#3c0f4c" fill-opacity="0.1862544957273005"/><rect x="1038.28" y="925" width="1" height="64" fill="#3c0f4c" fill-opacity="0.20985742398357365"/><rect x="1267.27" y="925" width="1" height="96" fill="#3c0f4c" fill-opacity="0.26908627252324346"/><rect x="647.64" y="925" width="1" height="96" fill="#3c0f4c" fill-opacity="0.20755503723120022"/><rect x="978.88" y="925" width="1" height="64" fill="#3c0f4c" fill-opacity="0.30467910567930223"/><rect x="1132.06" y="925" width="1" height="96" fill="#3c0f4c" fill-opacity="0.25376394833136773"/><rect x="739.32" y="925" width="1" height="64" fill="#3c0f4c" fill-opacity="0.19448939124389353"/><rect x="1592.61" y="925" width="1" height="32" fill="#3c0f4c" fill-opacity="0.3405155410240468"/><rect x="870.77" y="925" width="1" height="96" fill="#3c0f4c" fill-opacity="0.3249883959400047"/><rect x="1719.7" y="925" width="1" height="32" fill="#3c0f4c" fill-opacity="0.13091167851542082"/><rect x="1278.09" y="925" width="1" height="96" fill="#3c0f4c" fill-opacity="0.1889583527421334"/><rect x="1245.91" y="925" width="1" height="64" fill="#3c0f4c" fill-opacity="0.24385490933506335"/><rect x="1767.61" y="925" width="1" height="96" fill="#3c0f4c" fill-opacity="0.2095890431611027"/><rect x="1044.04" y="925" width="1" height="64" fill="#3c0f4c" fill-opacity="0.22420495173347726"/><rect x="651.72" y="925" width="1" height="32" fill="#3c0f4c" fill-opacity="0.2408070983196236"/><rect x="751.78" y="925" width="1" height="64" fill="#3c0f4c" fill-opacity="0.2352090262785967"/><rect x="1372.52" y="925" width="1" height="32" fill="#3c0f4c" fill-opacity="0.3223620730883573"/><rect x="1729.37" y="925" width="1" height="96" fill="#3c0f4c" fill-opacity="0.2123773887845693"/><rect x="1506.7" y="925" width="1" height="64" fill="#3c0f4c" fill-opacity="0.2790629702205354"/><rect x="1483.14" y="925" width="1" height="32" fill="#3c0f4c" fill-opacity="0.1592661343770093"/><rect x="999.27" y="925" width="1" height="32" fill="#3c0f4c" fill-opacity="0.30998674140456983"/><rect x="1218.97" y="925" width="1" height="32" fill="#3c0f4c" fill-opacity="0.2708629481921907"/><rect x="973.11" y="925" width="1" height="64" fill="#3c0f4c" fill-opacity="0.3087275696928803"/><rect x="1758.49" y="925" width="1" height="96" fill="#3c0f4c" fill-opacity="0.26515328963079987"/><rect x="1231.92" y="925" width="1" height="32" fill="#3c0f4c" fill-opacity="0.23612409886287503"/><rect x="852.47" y="925" width="1" height="32" fill="#3c0f4c" fill-opacity="0.13383907932730452"/><rect x="1278.11" y="925" width="1" height="32" fill="#3c0f4c" fill-opacity="0.20123237402043792"/><rect x="1762.44" y="925" width="1" height="32" fill="#3c0f4c" fill-opacity="0.2791000050650988"/><rect x="652.12" y="925" width="1" height="32" fill="#3c0f4c" fill-opacity="0.19055030422990543"/><rect x="1420.14" y="925" width="1" height="32" fill="#3c0f4c" fill-opacity="0.33091738358158634"/><rect x="1089.05" y="925" width="1" height="32" fill="#3c0f4c" fill-opacity="0.2548261008676249"/><rect x="1394.63" y="925" width="1" height="32" fill="#3c0f4c" fill-opacity="0.16029466602584794"/><rect x="1508.55" y="925" width="1" height="64" fill="#3c0f4c" fill-opacity="0.3203618008551494"/><rect x="1651.54" y="925" width="1" height="32" fill="#3c0f4c" fill-opacity="0.2521275756185193"/><rect x="1104.34" y="925" width="1" height="32" fill="#3c0f4c" fill-opacity="0.15343140032930142"/><rect x="1225.56" y="925" width="1" height="32" fill="#3c0f4c" fill-opacity="0.1266778552757489"/><rect x="725.99" y="925" width="1" height="96" fill="#3c0f4c" fill-opacity="0.30932239165551245"/><rect x="1332.39" y="925" width="1" height="32" fill="#3c0f4c" fill-opacity="0.26952306004519"/><rect x="1413.22" y="925" width="1" height="64" fill="#3c0f4c" fill-opacity="0.1531032438915616"/><rect x="909.12" y="925" width="1" height="64" fill="#3c0f4c" fill-opacity="0.15896536370787612"/><rect x="941.14" y="925" width="1" height="32" fill="#3c0f4c" fill-opacity="0.31764530828510723"/><rect x="1710.43" y="925" width="1" height="32" fill="#3c0f4c" fill-opacity="0.20024552266359436"/><rect x="1148.09" y="925" width="1" height="96" fill="#3c0f4c" fill-opacity="0.1244961186690341"/><rect x="888.54" y="925" width="1" height="96" fill="#3c0f4c" fill-opacity="0.2540122873018149"/><rect x="1723.88" y="925" width="1" height="96" fill="#3c0f4c" fill-opacity="0.1325544110882353"/><rect x="909.15" y="925" width="1" height="32" fill="#3c0f4c" fill-opacity="0.13011511464910566"/><rect x="1691.36" y="925" width="1" height="32" fill="#3c0f4c" fill-opacity="0.19240250439507933"/><rect x="1655.27" y="925" width="1" height="96" fill="#3c0f4c" fill-opacity="0.18984560620953572"/><rect x="1320.58" y="925" width="1" height="96" fill="#3c0f4c" fill-opacity="0.3452945370110393"/><rect x="716.27" y="925" width="1" height="96" fill="#3c0f4c" fill-opacity="0.2752293101344043"/><rect x="1300.55" y="925" width="1" height="96" fill="#3c0f4c" fill-opacity="0.19110631265996042"/><rect x="1628.66" y="925" width="1" height="96" fill="#3c0f4c" fill-opacity="0.1251580948556511"/><rect x="1620.65" y="925" width="1" height="32" fill="#3c0f4c" fill-opacity="0.1598975463143184"/><rect x="1044.81" y="925" width="1" height="32" fill="#3c0f4c" fill-opacity="0.12175527478349142"/><rect x="1636.56" y="925" width="1" height="96" fill="#3c0f4c" fill-opacity="0.24915282632019634"/><rect x="769.76" y="925" width="1" height="96" fill="#3c0f4c" fill-opacity="0.1972524786944322"/><rect x="1375.62" y="925" width="1" height="32" fill="#3c0f4c" fill-opacity="0.21712371565356708"/><rect x="1671.23" y="925" width="1" height="32" fill="#3c0f4c" fill-opacity="0.2090936260966581"/><rect x="1167.49" y="925" width="1" height="64" fill="#3c0f4c" fill-opacity="0.17455018110709325"/><rect x="679.44" y="925" width="1" height="32" fill="#3c0f4c" fill-opacity="0.1985268538081671"/><rect x="816.08" y="925" width="1" height="32" fill="#3c0f4c" fill-opacity="0.1413051999743889"/><rect x="944.59" y="925" width="1" height="32" fill="#3c0f4c" fill-opacity="0.24764442624122646"/><rect x="1167.54" y="925" width="1" height="32" fill="#3c0f4c" fill-opacity="0.15662106048033345"/><rect x="1038.62" y="925" width="1" height="96" fill="#3c0f4c" fill-opacity="0.2066855296101351"/><rect x="1722.52" y="925" width="1" height="32" fill="#3c0f4c" fill-opacity="0.18836833505865913"/><rect x="1177.59" y="925" width="1" height="32" fill="#3c0f4c" fill-opacity="0.17227278856508196"/><rect x="1151.32" y="925" width="1" height="32" fill="#3c0f4c" fill-opacity="0.3366800511068763"/><rect x="1767.15" y="925" width="1" height="96" fill="#3c0f4c" fill-opacity="0.25513966320226905"/><rect x="1055.65" y="925" width="1" height="32" fill="#3c0f4c" fill-opacity="0.2129546453795346"/><rect x="1216.26" y="925" width="1" height="32" fill="#3c0f4c" fill-opacity="0.32064979428542395"/><rect x="778.69" y="925" width="1" height="32" fill="#3c0f4c" fill-opacity="0.24479635257964757"/><rect x="945.43" y="925" width="1" height="96" fill="#3c0f4c" fill-opacity="0.12660486572407137"/><rect x="1451.24" y="925" width="1" height="32" fill="#3c0f4c" fill-opacity="0.1914814606565988"/><rect x="1080.43" y="925" width="1" height="32" fill="#3c0f4c" fill-opacity="0.27977257498145736"/><rect x="1516.65" y="925" width="1" height="32" fill="#3c0f4c" fill-opacity="0.19383854674780604"/><rect x="1388.57" y="925" width="1" height="32" fill="#3c0f4c" fill-opacity="0.13565858445508666"/><rect x="1672.19" y="925" width="1" height="64" fill="#3c0f4c" fill-opacity="0.16434960033863427"/><rect x="1451.79" y="925" width="1" height="32" fill="#3c0f4c" fill-opacity="0.1720777092603645"/><rect x="782.47" y="925" width="1" height="96" fill="#3c0f4c" fill-opacity="0.1849437333781765"/><rect x="1095.62" y="925" width="1" height="96" fill="#3c0f4c" fill-opacity="0.29824926558470766"/><rect x="1637.07" y="925" width="1" height="32" fill="#3c0f4c" fill-opacity="0.3354502252757537"/><rect x="839.24" y="925" width="1" height="64" fill="#3c0f4c" fill-opacity="0.2763136667300757"/><rect x="1389.55" y="925" width="1" height="64" fill="#3c0f4c" fill-opacity="0.3262971175826434"/><rect x="668.54" y="925" width="1" height="96" fill="#3c0f4c" fill-opacity="0.1771368296443379"/><rect x="1596.36" y="925" width="1" height="64" fill="#3c0f4c" fill-opacity="0.3283904875414838"/><rect x="750.35" y="925" width="1" height="64" fill="#3c0f4c" fill-opacity="0.14650329323339675"/><rect x="1670.88" y="925" width="1" height="32" fill="#3c0f4c" fill-opacity="0.2838950280532707"/><rect x="685.69" y="925" width="1" height="32" fill="#3c0f4c" fill-opacity="0.2599618214164898"/><rect x="1126.48" y="925" width="1" height="64" fill="#3c0f4c" fill-opacity="0.15592350712098668"/><rect x="1473.94" y="925" width="1" height="64" fill="#3c0f4c" fill-opacity="0.2647747847945424"/><rect x="1703.49" y="925" width="1" height="32" fill="#3c0f4c" fill-opacity="0.2511380093136065"/><rect x="1449.44" y="925" width="1" height="64" fill="#3c0f4c" fill-opacity="0.33290936112429526"/><rect x="1396.92" y="925" width="1" height="64" fill="#3c0f4c" fill-opacity="0.33520518720316517"/><rect x="766.36" y="925" width="1" height="64" fill="#3c0f4c" fill-opacity="0.32724627971560316"/><rect x="1628.44" y="925" width="1" height="32" fill="#3c0f4c" fill-opacity="0.34404953648317693"/><rect x="1409.27" y="925" width="1" height="32" fill="#3c0f4c" fill-opacity="0.3020306459312649"/><rect x="877.35" y="925" width="1" height="64" fill="#3c0f4c" fill-opacity="0.29239073686404937"/><rect x="737.29" y="925" width="1" height="96" fill="#3c0f4c" fill-opacity="0.3495652027572639"/><rect x="1335.02" y="925" width="1" height="32" fill="#3c0f4c" fill-opacity="0.1846681094265331"/><rect x="741.58" y="925" width="1" height="96" fill="#3c0f4c" fill-opacity="0.22178814235290878"/><rect x="1024.37" y="925" width="1" height="96" fill="#3c0f4c" fill-opacity="0.23699141191310535"/><rect x="1404.21" y="925" width="1" height="32" fill="#3c0f4c" fill-opacity="0.2185205906243461"/><rect x="1218.17" y="925" width="1" height="32" fill="#3c0f4c" fill-opacity="0.2325873149576942"/><rect x="853.81" y="925" width="1" height="64" fill="#3c0f4c" fill-opacity="0.16014207561070323"/><rect x="824.89" y="925" width="1" height="32" fill="#3c0f4c" fill-opacity="0.24510426752167694"/><rect x="922.02" y="925" width="1" height="32" fill="#3c0f4c" fill-opacity="0.1586517436228687"/><rect x="1032.2" y="925" width="1" height="32" fill="#3c0f4c" fill-opacity="0.16632451255914746"/><rect x="990.77" y="925" width="1" height="32" fill="#3c0f4c" fill-opacity="0.2778333527788799"/><rect x="1189.44" y="925" width="1" height="96" fill="#3c0f4c" fill-opacity="0.17471070619145668"/><rect x="913.01" y="925" width="1" height="96" fill="#3c0f4c" fill-opacity="0.15061348896655444"/><rect x="1363.91" y="925" width="1" height="64" fill="#3c0f4c" fill-opacity="0.1506817840298833"/><rect x="1439.36" y="925" width="1" height="32" fill="#3c0f4c" fill-opacity="0.19672148916693316"/><rect x="1560.99" y="925" width="1" height="96" fill="#3c0f4c" fill-opacity="0.2949189204460373"/><rect x="831.12" y="925" width="1" height="32" fill="#3c0f4c" fill-opacity="0.257697154993125"/><rect x="1160.9" y="925" width="1" height="96" fill="#3c0f4c" fill-opacity="0.31116932144354903"/><rect x="769.3" y="925" width="1" height="64" fill="#3c0f4c" fill-opacity="0.1228453999974622"/><rect x="1189.62" y="925" width="1" height="32" fill="#3c0f4c" fill-opacity="0.13387632389394016"/><rect x="957.26" y="925" width="1" height="32" fill="#3c0f4c" fill-opacity="0.1454369289530328"/><rect x="988.92" y="925" width="1" height="32" fill="#3c0f4c" fill-opacity="0.15710350479653667"/><rect x="1142.71" y="925" width="1" height="64" fill="#3c0f4c" fill-opacity="0.18658632106082085"/><rect x="1269.73" y="925" width="1" height="32" fill="#3c0f4c" fill-opacity="0.12248725591419396"/><rect x="1760.61" y="925" width="1" height="96" fill="#3c0f4c" fill-opacity="0.1393135114899045"/><rect x="1450.01" y="925" width="1" height="64" fill="#3c0f4c" fill-opacity="0.14502457207720565"/><rect x="1192.19" y="925" width="1" height="96" fill="#3c0f4c" fill-opacity="0.23231896924716217"/><rect x="1525.39" y="925" width="1" height="64" fill="#3c0f4c" fill-opacity="0.12190949047087105"/><rect x="1678.64" y="925" width="1" height="64" fill="#3c0f4c" fill-opacity="0.2643811819782246"/><rect x="1696.36" y="925" width="1" height="64" fill="#3c0f4c" fill-opacity="0.2702067745221953"/><rect x="728.26" y="925" width="1" height="32" fill="#3c0f4c" fill-opacity="0.1258173999050324"/><rect x="1086.46" y="925" width="1" height="32" fill="#3c0f4c" fill-opacity="0.18815253276090466"/><rect x="849.79" y="925" width="1" height="32" fill="#3c0f4c" fill-opacity="0.14350072883413661"/><rect x="1451.94" y="925" width="1" height="64" fill="#3c0f4c" fill-opacity="0.29073432789640774"/><rect x="1008.98" y="925" width="1" height="32" fill="#3c0f4c" fill-opacity="0.2688801575439062"/><rect x="1042.38" y="925" width="1" height="32" fill="#3c0f4c" fill-opacity="0.20476091780780878"/><rect x="1262.51" y="925" width="1" height="64" fill="#3c0f4c" fill-opacity="0.312698759296688"/><rect x="926.38" y="925" width="1" height="32" fill="#3c0f4c" fill-opacity="0.12948818687099437"/><rect x="1280.28" y="925" width="1" height="96" fill="#3c0f4c" fill-opacity="0.32819502950925983"/><rect x="1707.3" y="925" width="1" height="96" fill="#3c0f4c" fill-opacity="0.2172854015595609"/><rect x="1465.39" y="925" width="1" height="64" fill="#3c0f4c" fill-opacity="0.25860377783817573"/><rect x="1347.63" y="925" width="1" height="32" fill="#3c0f4c" fill-opacity="0.2782363197380664"/><rect x="824.83" y="925" width="1" height="96" fill="#3c0f4c" fill-opacity="0.26645384462965227"/><rect x="1093.37" y="925" width="1" height="32" fill="#3c0f4c" fill-opacity="0.31565396935556533"/><rect x="1181.48" y="925" width="1" height="32" fill="#3c0f4c" fill-opacity="0.2862785683994931"/><rect x="643.17" y="925" width="1" height="96" fill="#3c0f4c" fill-opacity="0.15292729068658537"/><rect x="721.32" y="925" width="1" height="32" fill="#3c0f4c" fill-opacity="0.2383630481621536"/><rect x="1115.75" y="925" width="1" height="64" fill="#3c0f4c" fill-opacity="0.13442507655098648"/><rect x="649.94" y="925" width="1" height="32" fill="#3c0f4c" fill-opacity="0.32791985367754767"/><rect x="825.76" y="925" width="1" height="64" fill="#3c0f4c" fill-opacity="0.12096451425497076"/><rect x="1548.3" y="925" width="1" height="64" fill="#3c0f4c" fill-opacity="0.25052848648239406"/><rect x="1169.55" y="925" width="1" height="64" fill="#3c0f4c" fill-opacity="0.23885938626460168"/><rect x="1123.85" y="925" width="1" height="32" fill="#3c0f4c" fill-opacity="0.3441049025380194"/><rect x="1726.37" y="925" width="1" height="32" fill="#3c0f4c" fill-opacity="0.3065640677230794"/><rect x="707.78" y="925" width="1" height="64" fill="#3c0f4c" fill-opacity="0.2601041909414552"/><rect x="975.51" y="925" width="1" height="96" fill="#3c0f4c" fill-opacity="0.33914635132839444"/><rect x="1182.99" y="925" width="1" height="32" fill="#3c0f4c" fill-opacity="0.18884172960378526"/><rect x="1027.88" y="925" width="1" height="32" fill="#3c0f4c" fill-opacity="0.31506534094686994"/><rect x="891.29" y="925" width="1" height="96" fill="#3c0f4c" fill-opacity="0.2790126297592931"/><rect x="805.94" y="925" width="1" height="64" fill="#3c0f4c" fill-opacity="0.24762176367325095"/><rect x="1705.32" y="925" width="1" height="64" fill="#3c0f4c" fill-opacity="0.24189504828493907"/><rect x="1277.96" y="925" width="1" height="96" fill="#3c0f4c" fill-opacity="0.1800486805012697"/><rect x="896.67" y="957" width="1" height="32" fill="#3c0f4c" fill-opacity="0.24606618741500869"/><rect x="766.81" y="957" width="1" height="64" fill="#3c0f4c" fill-opacity="0.26942505577088804"/><rect x="851.83" y="957" width="1" height="64" fill="#3c0f4c" fill-opacity="0.2830925434271526"/><rect x="896.39" y="957" width="1" height="96" fill="#3c0f4c" fill-opacity="0.172107509780542"/><rect x="1286.87" y="957" width="1" height="32" fill="#3c0f4c" fill-opacity="0.28918494081521334"/><rect x="1667" y="957" width="1" height="32" fill="#3c0f4c" fill-opacity="0.3158534859407398"/><rect x="1407.49" y="957" width="1" height="96" fill="#3c0f4c" fill-opacity="0.15088553844839106"/><rect x="1208.29" y="957" width="1" height="32" fill="#3c0f4c" fill-opacity="0.2641167826790454"/><rect x="1724.75" y="957" width="1" height="32" fill="#3c0f4c" fill-opacity="0.2257971192967032"/><rect x="1414.79" y="957" width="1" height="32" fill="#3c0f4c" fill-opacity="0.3426309524536703"/><rect x="856.46" y="957" width="1" height="96" fill="#3c0f4c" fill-opacity="0.298245400424424"/><rect x="794.52" y="957" width="1" height="32" fill="#3c0f4c" fill-opacity="0.21300199415152887"/><rect x="693.34" y="957" width="1" height="32" fill="#3c0f4c" fill-opacity="0.12348935493412729"/><rect x="1311.27" y="957" width="1" height="32" fill="#3c0f4c" fill-opacity="0.22573230876761596"/><rect x="776.15" y="957" width="1" height="32" fill="#3c0f4c" fill-opacity="0.21797434806051155"/><rect x="1643.7" y="957" width="1" height="32" fill="#3c0f4c" fill-opacity="0.24948063028144477"/><rect x="1676.32" y="957" width="1" height="64" fill="#3c0f4c" fill-opacity="0.1586411670923676"/><rect x="1481.97" y="957" width="1" height="64" fill="#3c0f4c" fill-opacity="0.30494525801861444"/><rect x="1471.39" y="957" width="1" height="32" fill="#3c0f4c" fill-opacity="0.3098950087934109"/><rect x="778.61" y="957" width="1" height="64" fill="#3c0f4c" fill-opacity="0.23803161091780178"/><rect x="1232.66" y="957" width="1" height="64" fill="#3c0f4c" fill-opacity="0.28600917512526547"/><rect x="689.14" y="957" width="1" height="64" fill="#3c0f4c" fill-opacity="0.14291841657325816"/><rect x="1259.91" y="957" width="1" height="32" fill="#3c0f4c" fill-opacity="0.12785368519151283"/><rect x="1668.1" y="957" width="1" height="32" fill="#3c0f4c" fill-opacity="0.1785585497431566"/><rect x="858.16" y="957" width="1" height="96" fill="#3c0f4c" fill-opacity="0.12489513101262863"/><rect x="1756.77" y="957" width="1" height="96" fill="#3c0f4c" fill-opacity="0.1461225196120955"/><rect x="663.67" y="957" width="1" height="32" fill="#3c0f4c" fill-opacity="0.13696360933899382"/><rect x="931.89" y="957" width="1" height="32" fill="#3c0f4c" fill-opacity="0.24747662979478302"/><rect x="967.59" y="957" width="1" height="96" fill="#3c0f4c" fill-opacity="0.31232754910868077"/><rect x="1304.5" y="957" width="1" height="64" fill="#3c0f4c" fill-opacity="0.24383973747023704"/><rect x="1418.81" y="957" width="1" height="64" fill="#3c0f4c" fill-opacity="0.33821628885075805"/><rect x="655.59" y="957" width="1" height="64" fill="#3c0f4c" fill-opacity="0.348731519018968"/><rect x="1190.26" y="957" width="1" height="96" fill="#3c0f4c" fill-opacity="0.3208035214042465"/><rect x="1544.11" y="957" width="1" height="32" fill="#3c0f4c" fill-opacity="0.13715889224354616"/><rect x="1340.77" y="957" width="1" height="96" fill="#3c0f4c" fill-opacity="0.3138805180745132"/><rect x="1732.82" y="957" width="1" height="96" fill="#3c0f4c" fill-opacity="0.21048569979308596"/><rect x="1626.08" y="957" width="1" height="32" fill="#3c0f4c" fill-opacity="0.2030144668052542"/><rect x="1236.67" y="957" width="1" height="64" fill="#3c0f4c" fill-opacity="0.3256164361544833"/><rect x="1305.53" y="957" width="1" height="32" fill="#3c0f4c" fill-opacity="0.16861743568656887"/><rect x="1565.26" y="957" width="1" height="96" fill="#3c0f4c" fill-opacity="0.19621491501271549"/><rect x="1169.06" y="957" width="1" height="64" fill="#3c0f4c" fill-opacity="0.19230274693203908"/><rect x="1018.95" y="957" width="1" height="96" fill="#3c0f4c" fill-opacity="0.19676927143426176"/><rect x="663.17" y="957" width="1" height="96" fill="#3c0f4c" fill-opacity="0.3215441417460998"/><rect x="1327.49" y="957" width="1" height="32" fill="#3c0f4c" fill-opacity="0.2872015130842033"/><rect x="802.25" y="957" width="1" height="96" fill="#3c0f4c" fill-opacity="0.18286775495559776"/><rect x="1204.75" y="957" width="1" height="64" fill="#3c0f4c" fill-opacity="0.20207175970719002"/><rect x="1287.8" y="957" width="1" height="32" fill="#3c0f4c" fill-opacity="0.3482019832035909"/><rect x="678.53" y="957" width="1" height="32" fill="#3c0f4c" fill-opacity="0.3206480214433827"/><rect x="1514.57" y="957" width="1" height="32" fill="#3c0f4c" fill-opacity="0.20346940131587926"/><rect x="958.05" y="957" width="1" height="32" fill="#3c0f4c" fill-opacity="0.32074710818559776"/><rect x="1700.2" y="957" width="1" height="32" fill="#3c0f4c" fill-opacity="0.18991905690342312"/><rect x="1502.18" y="957" width="1" height="64" fill="#3c0f4c" fill-opacity="0.23704861951050718"/><rect x="1357.47" y="957" width="1" height="64" fill="#3c0f4c" fill-opacity="0.3207582326730358"/><rect x="1448.37" y="957" width="1" height="64" fill="#3c0f4c" fill-opacity="0.13390327559390486"/><rect x="1020.89" y="957" width="1" height="64" fill="#3c0f4c" fill-opacity="0.3232423560122905"/><rect x="1523.91" y="957" width="1" height="64" fill="#3c0f4c" fill-opacity="0.3256660648881424"/><rect x="1554.01" y="957" width="1" height="64" fill="#3c0f4c" fill-opacity="0.154686268427913"/><rect x="871.96" y="957" width="1" height="96" fill="#3c0f4c" fill-opacity="0.21314574779919687"/><rect x="1087.37" y="957" width="1" height="64" fill="#3c0f4c" fill-opacity="0.33378037317731546"/><rect x="1302.78" y="957" width="1" height="32" fill="#3c0f4c" fill-opacity="0.18934257988308564"/><rect x="988.45" y="957" width="1" height="64" fill="#3c0f4c" fill-opacity="0.13690512323291315"/><rect x="854.87" y="957" width="1" height="32" fill="#3c0f4c" fill-opacity="0.254532278113894"/><rect x="983.64" y="957" width="1" height="64" fill="#3c0f4c" fill-opacity="0.3471163154215414"/><rect x="1043.21" y="957" width="1" height="96" fill="#3c0f4c" fill-opacity="0.2858771385975978"/><rect x="1681.35" y="957" width="1" height="96" fill="#3c0f4c" fill-opacity="0.1934291729092174"/><rect x="837.93" y="957" width="1" height="64" fill="#3c0f4c" fill-opacity="0.24569152247389076"/><rect x="1496.72" y="957" width="1" height="64" fill="#3c0f4c" fill-opacity="0.17448734776683805"/><rect x="662.66" y="957" width="1" height="32" fill="#3c0f4c" fill-opacity="0.21190192232296845"/><rect x="866.29" y="957" width="1" height="64" fill="#3c0f4c" fill-opacity="0.31873651858747537"/><rect x="1372.02" y="957" width="1" height="32" fill="#3c0f4c" fill-opacity="0.17559919952448122"/><rect x="704.16" y="957" width="1" height="32" fill="#3c0f4c" fill-opacity="0.25823498756571295"/><rect x="729.58" y="957" width="1" height="64" fill="#3c0f4c" fill-opacity="0.28537329309756343"/><rect x="645.7" y="957" width="1" height="64" fill="#3c0f4c" fill-opacity="0.2434960710836327"/><rect x="1628.81" y="957" width="1" height="64" fill="#3c0f4c" fill-opacity="0.33226419110850935"/><rect x="879.71" y="957" width="1" height="64" fill="#3c0f4c" fill-opacity="0.31957866536337587"/><rect x="670.59" y="957" width="1" height="96" fill="#3c0f4c" fill-opacity="0.21322310492583318"/><rect x="1406.89" y="957" width="1" height="64" fill="#3c0f4c" fill-opacity="0.16013610790083593"/><rect x="1615.1" y="957" width="1" height="32" fill="#3c0f4c" fill-opacity="0.1400555505905418"/><rect x="1332.15" y="957" width="1" height="96" fill="#3c0f4c" fill-opacity="0.3471997353248654"/><rect x="1091.3" y="957" width="1" height="96" fill="#3c0f4c" fill-opacity="0.32086227158552416"/><rect x="669.07" y="957" width="1" height="64" fill="#3c0f4c" fill-opacity="0.24975203991265046"/><rect x="1755.41" y="957" width="1" height="32" fill="#3c0f4c" fill-opacity="0.21548104331800744"/><rect x="1442.11" y="957" width="1" height="64" fill="#3c0f4c" fill-opacity="0.15603609406570496"/><rect x="661.01" y="957" width="1" height="32" fill="#3c0f4c" fill-opacity="0.15281135009065933"/><rect x="1506.54" y="957" width="1" height="32" fill="#3c0f4c" fill-opacity="0.2023042933436034"/><rect x="1048.57" y="957" width="1" height="64" fill="#3c0f4c" fill-opacity="0.2438920096042343"/><rect x="1304.7" y="957" width="1" height="32" fill="#3c0f4c" fill-opacity="0.27119265143364923"/><rect x="1319.47" y="957" width="1" height="64" fill="#3c0f4c" fill-opacity="0.17290071167386395"/><rect x="1338.79" y="957" width="1" height="96" fill="#3c0f4c" fill-opacity="0.29556096253749475"/><rect x="1516.48" y="957" width="1" height="64" fill="#3c0f4c" fill-opacity="0.2698773790724528"/><rect x="1260.65" y="957" width="1" height="96" fill="#3c0f4c" fill-opacity="0.2486390051543745"/><rect x="1048.15" y="957" width="1" height="64" fill="#3c0f4c" fill-opacity="0.1503288652611565"/><rect x="650.21" y="957" width="1" height="96" fill="#3c0f4c" fill-opacity="0.14295186378607933"/><rect x="1553.99" y="957" width="1" height="64" fill="#3c0f4c" fill-opacity="0.1546364220052271"/><rect x="1350.35" y="957" width="1" height="96" fill="#3c0f4c" fill-opacity="0.2940152992694795"/><rect x="741.56" y="957" width="1" height="32" fill="#3c0f4c" fill-opacity="0.26366487377027353"/><rect x="778.05" y="957" width="1" height="32" fill="#3c0f4c" fill-opacity="0.24770699671503413"/><rect x="845.37" y="957" width="1" height="64" fill="#3c0f4c" fill-opacity="0.2896472185428629"/><rect x="1659.78" y="957" width="1" height="32" fill="#3c0f4c" fill-opacity="0.2415545420846334"/><rect x="1036.26" y="957" width="1" height="32" fill="#3c0f4c" fill-opacity="0.22155811969888334"/><rect x="1611.18" y="957" width="1" height="32" fill="#3c0f4c" fill-opacity="0.266308886556635"/><rect x="1028.81" y="957" width="1" height="96" fill="#3c0f4c" fill-opacity="0.22582275933609364"/><rect x="1005.77" y="957" width="1" height="32" fill="#3c0f4c" fill-opacity="0.14479498119508083"/><rect x="1468.36" y="957" width="1" height="32" fill="#3c0f4c" fill-opacity="0.3055528985593896"/><rect x="1671.97" y="957" width="1" height="64" fill="#3c0f4c" fill-opacity="0.13379667134930825"/><rect x="1277.27" y="957" width="1" height="96" fill="#3c0f4c" fill-opacity="0.3286147461190806"/><rect x="1064.2" y="957" width="1" height="32" fill="#3c0f4c" fill-opacity="0.12706252513783883"/><rect x="663.45" y="957" width="1" height="96" fill="#3c0f4c" fill-opacity="0.1756207099051591"/><rect x="1040.19" y="957" width="1" height="64" fill="#3c0f4c" fill-opacity="0.2946085068426299"/><rect x="1365.94" y="957" width="1" height="64" fill="#3c0f4c" fill-opacity="0.3222666593543564"/><rect x="1203.17" y="957" width="1" height="32" fill="#3c0f4c" fill-opacity="0.22979537769039038"/><rect x="1694.83" y="957" width="1" height="64" fill="#3c0f4c" fill-opacity="0.3394810897324539"/><rect x="794.2" y="957" width="1" height="64" fill="#3c0f4c" fill-opacity="0.18499016724779882"/><rect x="1014.46" y="957" width="1" height="96" fill="#3c0f4c" fill-opacity="0.3205831564584598"/><rect x="922.07" y="957" width="1" height="64" fill="#3c0f4c" fill-opacity="0.27703787364332944"/><rect x="1314.98" y="957" width="1" height="96" fill="#3c0f4c" fill-opacity="0.16877555678204872"/><rect x="698.88" y="957" width="1" height="32" fill="#3c0f4c" fill-opacity="0.3158097633959416"/><rect x="1470.76" y="957" width="1" height="32" fill="#3c0f4c" fill-opacity="0.2993574195206631"/><rect x="1615.15" y="957" width="1" height="32" fill="#3c0f4c" fill-opacity="0.2200059633606105"/><rect x="797.9" y="957" width="1" height="64" fill="#3c0f4c" fill-opacity="0.27758544881356906"/><rect x="1549.27" y="957" width="1" height="32" fill="#3c0f4c" fill-opacity="0.3440973805630225"/><rect x="650.65" y="957" width="1" height="64" fill="#3c0f4c" fill-opacity="0.15468457770053157"/><rect x="1471.33" y="957" width="1" height="32" fill="#3c0f4c" fill-opacity="0.2927999358535608"/><rect x="1164.63" y="957" width="1" height="96" fill="#3c0f4c" fill-opacity="0.14075322013546793"/><rect x="1023.51" y="957" width="1" height="96" fill="#3c0f4c" fill-opacity="0.32284880352916867"/><rect x="1746.51" y="957" width="1" height="32" fill="#3c0f4c" fill-opacity="0.2546130109128403"/><rect x="867.46" y="957" width="1" height="32" fill="#3c0f4c" fill-opacity="0.12871102155008393"/><rect x="1210.15" y="957" width="1" height="32" fill="#3c0f4c" fill-opacity="0.25221567734341427"/><rect x="1428.87" y="957" width="1" height="32" fill="#3c0f4c" fill-opacity="0.13111329047291934"/><rect x="1649.78" y="957" width="1" height="32" fill="#3c0f4c" fill-opacity="0.3220715897931159"/><rect x="776.06" y="957" width="1" height="96" fill="#3c0f4c" fill-opacity="0.34323522620824254"/><rect x="1233.46" y="957" width="1" height="32" fill="#3c0f4c" fill-opacity="0.1611656746380018"/><rect x="1414.15" y="957" width="1" height="32" fill="#3c0f4c" fill-opacity="0.2656363056584342"/><rect x="1256.17" y="957" width="1" height="32" fill="#3c0f4c" fill-opacity="0.24188430571050729"/><rect x="1588.3" y="957" width="1" height="32" fill="#3c0f4c" fill-opacity="0.200371565172172"/><rect x="883" y="957" width="1" height="32" fill="#3c0f4c" fill-opacity="0.2882216209668614"/><rect x="948.32" y="957" width="1" height="32" fill="#3c0f4c" fill-opacity="0.12349763788930403"/><rect x="943.84" y="957" width="1" height="32" fill="#3c0f4c" fill-opacity="0.1651827234552264"/><rect x="694.05" y="957" width="1" height="64" fill="#3c0f4c" fill-opacity="0.18145782517221365"/><rect x="1007.89" y="957" width="1" height="32" fill="#3c0f4c" fill-opacity="0.2702163300988096"/><rect x="1254.41" y="957" width="1" height="64" fill="#3c0f4c" fill-opacity="0.27876624751378454"/><rect x="1749.58" y="957" width="1" height="64" fill="#3c0f4c" fill-opacity="0.21183512312957048"/><rect x="999.48" y="957" width="1" height="96" fill="#3c0f4c" fill-opacity="0.20808439667355536"/><rect x="810.82" y="957" width="1" height="96" fill="#3c0f4c" fill-opacity="0.32278631258229656"/><rect x="1547.84" y="957" width="1" height="32" fill="#3c0f4c" fill-opacity="0.1749910410478777"/><rect x="1205.94" y="957" width="1" height="64" fill="#3c0f4c" fill-opacity="0.2795430019535778"/><rect x="1464.53" y="957" width="1" height="32" fill="#3c0f4c" fill-opacity="0.30987781581011975"/><rect x="1389.34" y="957" width="1" height="32" fill="#3c0f4c" fill-opacity="0.31390318455391747"/><rect x="1525.49" y="957" width="1" height="32" fill="#3c0f4c" fill-opacity="0.21333845831203124"/><rect x="1270.85" y="957" width="1" height="96" fill="#3c0f4c" fill-opacity="0.2462580970946176"/><rect x="996.49" y="957" width="1" height="32" fill="#3c0f4c" fill-opacity="0.22889813439270468"/><rect x="1371.16" y="957" width="1" height="96" fill="#3c0f4c" fill-opacity="0.23732972650783024"/><rect x="1309" y="957" width="1" height="96" fill="#3c0f4c" fill-opacity="0.17391994677296196"/><rect x="1351.04" y="957" width="1" height="96" fill="#3c0f4c" fill-opacity="0.20169670897573067"/><rect x="712.42" y="957" width="1" height="64" fill="#3c0f4c" fill-opacity="0.26094716669401685"/><rect x="1404.9" y="957" width="1" height="64" fill="#3c0f4c" fill-opacity="0.13655887793486665"/><rect x="1540.57" y="957" width="1" height="32" fill="#3c0f4c" fill-opacity="0.3325079376316"/><rect x="1504.51" y="957" width="1" height="64" fill="#3c0f4c" fill-opacity="0.32901182058032663"/><rect x="1174.57" y="957" width="1" height="64" fill="#3c0f4c" fill-opacity="0.2400699589072388"/><rect x="1178.34" y="957" width="1" height="32" fill="#3c0f4c" fill-opacity="0.3498645854941055"/><rect x="714.38" y="957" width="1" height="64" fill="#3c0f4c" fill-opacity="0.2405042923771853"/><rect x="1235.78" y="957" width="1" height="64" fill="#3c0f4c" fill-opacity="0.1748877073447925"/><rect x="834.67" y="957" width="1" height="96" fill="#3c0f4c" fill-opacity="0.16087411602825633"/><rect x="1710.04" y="957" width="1" height="32" fill="#3c0f4c" fill-opacity="0.19405149689085988"/><rect x="1048.61" y="957" width="1" height="96" fill="#3c0f4c" fill-opacity="0.14829782250751555"/><rect x="813.77" y="957" width="1" height="64" fill="#3c0f4c" fill-opacity="0.20628378446135429"/><rect x="1052.01" y="957" width="1" height="64" fill="#3c0f4c" fill-opacity="0.22414516428347467"/><rect x="739.4" y="957" width="1" height="96" fill="#3c0f4c" fill-opacity="0.1868150171585474"/><rect x="1143.98" y="957" width="1" height="32" fill="#3c0f4c" fill-opacity="0.22334235434208918"/><rect x="1180.29" y="957" width="1" height="32" fill="#3c0f4c" fill-opacity="0.29452464691540353"/><rect x="809.29" y="765" width="1.5" height="32" fill="#1a1436" fill-opacity="0.8380629788762544"/><rect x="1192.07" y="765" width="1.5" height="32" fill="#1a1436" fill-opacity="0.831092651062982"/><rect x="1231.16" y="765" width="1.5" height="32" fill="#1a1436" fill-opacity="0.8805449030056344"/><rect x="660.07" y="797" width="1.5" height="32" fill="#1a1436" fill-opacity="0.670298499616107"/><rect x="705.21" y="797" width="1.5" height="32" fill="#1a1436" fill-opacity="0.6624503098971317"/><rect x="1675.67" y="797" width="1.5" height="32" fill="#1a1436" fill-opacity="0.6894674396860678"/><rect x="1582.16" y="797" width="2" height="32" fill="#1a1436" fill-opacity="0.631965047372966"/><rect x="1610.12" y="797" width="2" height="32" fill="#1a1436" fill-opacity="0.6705890293784824"/><rect x="1722.48" y="829" width="1.5" height="32" fill="#1a1436" fill-opacity="0.7016584896762037"/><rect x="1679.73" y="829" width="2" height="32" fill="#1a1436" fill-opacity="0.851091445646327"/><rect x="1054.72" y="829" width="1.5" height="32" fill="#1a1436" fill-opacity="0.8493877400724852"/><rect x="1735.37" y="829" width="1.5" height="32" fill="#1a1436" fill-opacity="0.7508384762470801"/><rect x="1037.98" y="829" width="1" height="32" fill="#1a1436" fill-opacity="0.7348750330313606"/><rect x="1684.58" y="829" width="1.5" height="32" fill="#1a1436" fill-opacity="0.6670634742244418"/><rect x="711.56" y="861" width="1" height="32" fill="#1a1436" fill-opacity="0.6710951772727646"/><rect x="730.29" y="861" width="2" height="32" fill="#1a1436" fill-opacity="0.755931374674969"/><rect x="1233.91" y="861" width="1" height="32" fill="#1a1436" fill-opacity="0.77380990667277"/><rect x="761.77" y="861" width="2" height="32" fill="#1a1436" fill-opacity="0.7972213198385346"/><rect x="1431.72" y="861" width="2" height="32" fill="#1a1436" fill-opacity="0.752642111817095"/><rect x="839.05" y="861" width="2" height="32" fill="#1a1436" fill-opacity="0.622783339798027"/><rect x="1194.89" y="861" width="1" height="32" fill="#1a1436" fill-opacity="0.7791274120172859"/><rect x="1397.19" y="861" width="2" height="32" fill="#1a1436" fill-opacity="0.8591568598157591"/><rect x="1251.81" y="861" width="1.5" height="32" fill="#1a1436" fill-opacity="0.9240224796380441"/><rect x="1265.57" y="861" width="2" height="32" fill="#1a1436" fill-opacity="0.8692299458058287"/><rect x="773.42" y="893" width="1" height="32" fill="#1a1436" fill-opacity="0.6772479708996504"/><rect x="1284.97" y="893" width="2" height="32" fill="#1a1436" fill-opacity="0.60541551400421"/><rect x="739.68" y="893" width="2" height="32" fill="#1a1436" fill-opacity="0.8636590881308366"/><rect x="702.13" y="893" width="1.5" height="32" fill="#1a1436" fill-opacity="0.838343852161934"/><rect x="1185.31" y="893" width="2" height="32" fill="#1a1436" fill-opacity="0.6191724143373373"/><rect x="1592.86" y="893" width="2" height="32" fill="#1a1436" fill-opacity="0.64907694309453"/><rect x="1562.63" y="893" width="1" height="32" fill="#1a1436" fill-opacity="0.9051764467305004"/><rect x="1001.99" y="893" width="1" height="32" fill="#1a1436" fill-opacity="0.6665876428140454"/><rect x="850.25" y="893" width="1.5" height="32" fill="#1a1436" fill-opacity="0.7886097211102663"/><rect x="737.83" y="893" width="1.5" height="32" fill="#1a1436" fill-opacity="0.7343034803067026"/><rect x="1267.66" y="893" width="2" height="32" fill="#1a1436" fill-opacity="0.7788433265688204"/><rect x="1409.26" y="893" width="1" height="32" fill="#1a1436" fill-opacity="0.7073963929457321"/><rect x="1619.02" y="893" width="1.5" height="32" fill="#1a1436" fill-opacity="0.8806902200180022"/><rect x="984.46" y="893" width="1" height="32" fill="#1a1436" fill-opacity="0.6461125662046486"/><rect x="1246.37" y="925" width="2" height="32" fill="#1a1436" fill-opacity="0.7308324961092902"/><rect x="1381.32" y="925" width="1" height="32" fill="#1a1436" fill-opacity="0.8484560542130585"/><rect x="1053.09" y="925" width="1" height="32" fill="#1a1436" fill-opacity="0.8805072972149722"/><rect x="1155.54" y="925" width="1" height="32" fill="#1a1436" fill-opacity="0.8474210332680089"/><rect x="1463.7" y="925" width="1" height="32" fill="#1a1436" fill-opacity="0.6029784600181701"/><rect x="1101.88" y="925" width="1.5" height="32" fill="#1a1436" fill-opacity="0.7977257835729819"/><rect x="679.89" y="925" width="2" height="32" fill="#1a1436" fill-opacity="0.6768923035162013"/><rect x="969.29" y="925" width="2" height="32" fill="#1a1436" fill-opacity="0.848694647649509"/><rect x="1098.58" y="925" width="1" height="32" fill="#1a1436" fill-opacity="0.854732558173748"/><rect x="1631.77" y="925" width="2" height="32" fill="#1a1436" fill-opacity="0.6202007324475585"/><rect x="1609.25" y="925" width="1" height="32" fill="#1a1436" fill-opacity="0.6435621933425745"/><rect x="1614.34" y="925" width="2" height="32" fill="#1a1436" fill-opacity="0.6251748184487494"/><rect x="843.5" y="925" width="1" height="32" fill="#1a1436" fill-opacity="0.9228394612852272"/><rect x="1202.74" y="925" width="1.5" height="32" fill="#1a1436" fill-opacity="0.835848135517175"/><rect x="1545.78" y="925" width="1" height="32" fill="#1a1436" fill-opacity="0.7870568457499596"/><rect x="804.65" y="925" width="1" height="32" fill="#1a1436" fill-opacity="0.9212503295418615"/><rect x="1223.08" y="925" width="1" height="32" fill="#1a1436" fill-opacity="0.7629821183780754"/><rect x="1525.81" y="925" width="2" height="32" fill="#1a1436" fill-opacity="0.9328047973484455"/><rect x="892.75" y="925" width="2" height="32" fill="#1a1436" fill-opacity="0.8917467064422103"/><rect x="1414.74" y="925" width="1" height="32" fill="#1a1436" fill-opacity="0.654192912234821"/><rect x="1683.49" y="925" width="1" height="32" fill="#1a1436" fill-opacity="0.6466878515825778"/><rect x="1584.41" y="925" width="1" height="32" fill="#1a1436" fill-opacity="0.7027722896289751"/><rect x="1628" y="957" width="1" height="32" fill="#1a1436" fill-opacity="0.8790218164142621"/><rect x="989.66" y="957" width="1" height="32" fill="#1a1436" fill-opacity="0.6903138951475718"/><rect x="811.57" y="957" width="1" height="32" fill="#1a1436" fill-opacity="0.8797801999962621"/><rect x="1082.2" y="957" width="2" height="32" fill="#1a1436" fill-opacity="0.6115298197766056"/><rect x="816.18" y="957" width="1" height="32" fill="#1a1436" fill-opacity="0.7018711207671294"/><rect x="863.82" y="957" width="1" height="32" fill="#1a1436" fill-opacity="0.6521226015305803"/><rect x="1125.53" y="957" width="1" height="32" fill="#1a1436" fill-opacity="0.8376173909044324"/><rect x="683.84" y="957" width="1" height="32" fill="#1a1436" fill-opacity="0.7231358397211471"/><rect x="1765.13" y="957" width="1" height="32" fill="#1a1436" fill-opacity="0.9288002530746333"/><rect x="968.41" y="957" width="2" height="32" fill="#1a1436" fill-opacity="0.7217819929586364"/><rect x="1644.57" y="957" width="1" height="32" fill="#1a1436" fill-opacity="0.9195343209992871"/><rect x="1187.52" y="957" width="1" height="32" fill="#1a1436" fill-opacity="0.9023972679379093"/><rect x="867.4" y="957" width="1" height="32" fill="#1a1436" fill-opacity="0.7646594900258699"/><rect x="1293.74" y="957" width="1" height="32" fill="#1a1436" fill-opacity="0.7049524397502941"/><rect x="1732.63" y="957" width="1" height="32" fill="#1a1436" fill-opacity="0.7205044926556288"/><rect x="1381.55" y="957" width="1.5" height="32" fill="#1a1436" fill-opacity="0.6175194945945818"/><rect x="1035.58" y="957" width="1.5" height="32" fill="#1a1436" fill-opacity="0.7683643164976591"/><rect x="1478.49" y="957" width="1.5" height="32" fill="#1a1436" fill-opacity="0.6626000697789853"/><rect x="1553.78" y="957" width="2" height="32" fill="#1a1436" fill-opacity="0.8532876614161675"/><rect x="748.06" y="957" width="1" height="32" fill="#1a1436" fill-opacity="0.7930489520693836"/><rect x="1312.73" y="957" width="1" height="32" fill="#1a1436" fill-opacity="0.7614888978195528"/><rect x="684.74" y="957" width="2" height="32" fill="#1a1436" fill-opacity="0.802733468890409"/><rect x="1370.57" y="957" width="1.5" height="32" fill="#1a1436" fill-opacity="0.6461892701340027"/><rect x="726.11" y="957" width="1" height="32" fill="#1a1436" fill-opacity="0.8546683492668019"/><rect x="1045.98" y="957" width="1" height="32" fill="#1a1436" fill-opacity="0.8319610415364872"/><rect x="1014.58" y="957" width="2" height="32" fill="#1a1436" fill-opacity="0.8948036240463484"/><rect x="982.67" y="957" width="1" height="32" fill="#1a1436" fill-opacity="0.6914483393200086"/><rect x="1632.9" y="957" width="2" height="32" fill="#1a1436" fill-opacity="0.6409748278824721"/><rect x="945.49" y="957" width="1.5" height="32" fill="#1a1436" fill-opacity="0.7893657773074054"/><rect x="1168.4" y="957" width="1" height="32" fill="#1a1436" fill-opacity="0.6574093673298577"/><rect x="1150.96" y="797" width="1.5" height="32" fill="#7f8f86" fill-opacity="0.7807329282398261"/><rect x="848.57" y="797" width="1.5" height="32" fill="#7f8f86" fill-opacity="0.8519530880867208"/><rect x="746.31" y="797" width="1" height="32" fill="#a4b4a0" fill-opacity="0.6567180517037824"/><rect x="1312.55" y="797" width="1.5" height="32" fill="#7f8f86" fill-opacity="0.9859031124502267"/><rect x="1343.82" y="829" width="1.5" height="32" fill="#9cb092" fill-opacity="0.623820442067542"/><rect x="1633.47" y="829" width="2" height="32" fill="#9cb092" fill-opacity="0.9112433626172973"/><rect x="1137.58" y="829" width="2" height="32" fill="#8fa88a" fill-opacity="0.8076496459056307"/><rect x="1204.49" y="829" width="2" height="32" fill="#9cb092" fill-opacity="0.7829319526398231"/><rect x="1099.46" y="829" width="2" height="32" fill="#9cb092" fill-opacity="0.8831238485991797"/><rect x="1496.15" y="829" width="1" height="32" fill="#a4b4a0" fill-opacity="0.6119007649130329"/><rect x="1092.25" y="829" width="1" height="32" fill="#a4b4a0" fill-opacity="0.7546054126823738"/><rect x="1597.04" y="829" width="1" height="32" fill="#9cb092" fill-opacity="0.685400671391837"/><rect x="1170.85" y="829" width="1.5" height="32" fill="#7f8f86" fill-opacity="0.7679165603907059"/><rect x="1519.33" y="829" width="2" height="32" fill="#a4b4a0" fill-opacity="0.7347571345780617"/><rect x="1015.66" y="829" width="1" height="32" fill="#7f8f86" fill-opacity="0.9032162067975036"/><rect x="792.03" y="829" width="3" height="32" fill="#9cb092" fill-opacity="0.6043820055123966"/><rect x="1540.24" y="829" width="1.5" height="32" fill="#8fa88a" fill-opacity="0.872830976722524"/><rect x="1145.37" y="829" width="1.5" height="32" fill="#8fa88a" fill-opacity="0.9941125623342222"/><rect x="1113.52" y="829" width="3" height="32" fill="#7f8f86" fill-opacity="0.6466031950558823"/><rect x="1758.26" y="829" width="2" height="32" fill="#9cb092" fill-opacity="0.7079179908762393"/><rect x="1767.13" y="829" width="3" height="32" fill="#9cb092" fill-opacity="0.6842840885737758"/><rect x="1764.8" y="829" width="1.5" height="32" fill="#9cb092" fill-opacity="0.6168431281724622"/><rect x="880.86" y="829" width="2" height="32" fill="#a4b4a0" fill-opacity="0.6038300954481651"/><rect x="1577.81" y="829" width="1" height="32" fill="#7f8f86" fill-opacity="0.6293594213553696"/><rect x="875.76" y="829" width="2" height="32" fill="#8fa88a" fill-opacity="0.6062036293783302"/><rect x="1059.84" y="829" width="3" height="32" fill="#7f8f86" fill-opacity="0.6508884369109114"/><rect x="1580.15" y="829" width="1.5" height="32" fill="#8fa88a" fill-opacity="0.9466102671208889"/><rect x="1348.47" y="829" width="1.5" height="32" fill="#a4b4a0" fill-opacity="0.9633694923769932"/><rect x="1459.33" y="829" width="1.5" height="32" fill="#8fa88a" fill-opacity="0.8957697559266604"/><rect x="1415.94" y="829" width="1" height="32" fill="#7f8f86" fill-opacity="0.952875901706565"/><rect x="1116.04" y="829" width="2" height="32" fill="#9cb092" fill-opacity="0.6436189056596054"/><rect x="909.28" y="829" width="3" height="32" fill="#7f8f86" fill-opacity="0.7027925593281248"/><rect x="971.44" y="861" width="1" height="32" fill="#8fa88a" fill-opacity="0.9716944745789567"/><rect x="782.77" y="861" width="1" height="32" fill="#7f8f86" fill-opacity="0.8237465371296036"/><rect x="956.51" y="861" width="1" height="32" fill="#8fa88a" fill-opacity="0.8995940447347605"/><rect x="944.05" y="861" width="1" height="32" fill="#7f8f86" fill-opacity="0.6996256114854085"/><rect x="839.08" y="861" width="1.5" height="32" fill="#a4b4a0" fill-opacity="0.8124014484052938"/><rect x="744.13" y="861" width="2" height="32" fill="#8fa88a" fill-opacity="0.956376091987925"/><rect x="1382" y="893" width="1" height="32" fill="#8fa88a" fill-opacity="0.8359502525182978"/><rect x="1176.28" y="893" width="1" height="32" fill="#a4b4a0" fill-opacity="0.8803880074972055"/><rect x="664.01" y="893" width="2" height="32" fill="#9cb092" fill-opacity="0.7928942890979962"/><rect x="1000.2" y="893" width="2" height="32" fill="#9cb092" fill-opacity="0.6301051600369535"/><rect x="1472.45" y="893" width="2" height="32" fill="#8fa88a" fill-opacity="0.9173066704373936"/><rect x="1037.4" y="893" width="3" height="32" fill="#7f8f86" fill-opacity="0.9603343757321515"/><rect x="1706.52" y="893" width="1" height="32" fill="#9cb092" fill-opacity="0.945389069616573"/><rect x="1345.89" y="893" width="1" height="32" fill="#7f8f86" fill-opacity="0.7516705679377285"/><rect x="1327.72" y="925" width="1" height="32" fill="#9cb092" fill-opacity="0.6362593729478249"/><rect x="1761.96" y="925" width="3" height="32" fill="#7f8f86" fill-opacity="0.891282830626219"/><rect x="1695.24" y="925" width="1" height="32" fill="#7f8f86" fill-opacity="0.7762089981514878"/><rect x="1225.87" y="925" width="1" height="32" fill="#9cb092" fill-opacity="0.7240939962902226"/><rect x="1183.24" y="925" width="1" height="32" fill="#8fa88a" fill-opacity="0.982958306963249"/><rect x="1201.64" y="925" width="1" height="32" fill="#7f8f86" fill-opacity="0.7023320880425526"/><rect x="1055.6" y="925" width="1.5" height="32" fill="#8fa88a" fill-opacity="0.8712547916524354"/><rect x="1225.53" y="925" width="3" height="32" fill="#a4b4a0" fill-opacity="0.8639960018703383"/><rect x="1202.84" y="925" width="2" height="32" fill="#8fa88a" fill-opacity="0.7307842475317632"/><rect x="864.21" y="925" width="1.5" height="32" fill="#7f8f86" fill-opacity="0.9214854920088899"/><rect x="1634.26" y="925" width="2" height="32" fill="#7f8f86" fill-opacity="0.6878309773895358"/><rect x="877.07" y="925" width="1" height="32" fill="#8fa88a" fill-opacity="0.7985868166409288"/><rect x="1443.32" y="925" width="1" height="32" fill="#a4b4a0" fill-opacity="0.9287430500064162"/><rect x="1149.01" y="925" width="3" height="32" fill="#a4b4a0" fill-opacity="0.9702927476587306"/><rect x="1072.09" y="925" width="3" height="32" fill="#7f8f86" fill-opacity="0.8688589194875109"/><rect x="1001.83" y="925" width="1" height="32" fill="#9cb092" fill-opacity="0.7112494852329166"/><rect x="1406.09" y="925" width="2" height="32" fill="#a4b4a0" fill-opacity="0.8282327841347894"/><rect x="1373.37" y="925" width="3" height="32" fill="#9cb092" fill-opacity="0.8563942168232237"/><rect x="1153.73" y="925" width="2" height="32" fill="#9cb092" fill-opacity="0.9076852554967059"/><rect x="908.15" y="925" width="1" height="32" fill="#8fa88a" fill-opacity="0.9187389255969005"/><rect x="1144.3" y="925" width="1.5" height="32" fill="#a4b4a0" fill-opacity="0.9833842607676041"/><rect x="865.16" y="925" width="1" height="32" fill="#7f8f86" fill-opacity="0.7024168884118976"/><rect x="1492.83" y="925" width="2" height="32" fill="#9cb092" fill-opacity="0.6716395235850113"/><rect x="1519.41" y="925" width="1.5" height="32" fill="#8fa88a" fill-opacity="0.7574064846299942"/><rect x="738.5" y="925" width="3" height="32" fill="#7f8f86" fill-opacity="0.6519639684274879"/><rect x="862.37" y="925" width="2" height="32" fill="#9cb092" fill-opacity="0.7507211075723561"/><rect x="1163.76" y="925" width="1" height="32" fill="#8fa88a" fill-opacity="0.639585857754754"/><rect x="880.92" y="925" width="2" height="32" fill="#7f8f86" fill-opacity="0.9921972605223726"/><rect x="1246.49" y="925" width="1" height="32" fill="#a4b4a0" fill-opacity="0.7047532615363291"/><rect x="1033.64" y="925" width="2" height="32" fill="#9cb092" fill-opacity="0.6148539466884767"/><rect x="1261.57" y="925" width="1" height="32" fill="#a4b4a0" fill-opacity="0.794978996872181"/><rect x="886.56" y="925" width="1" height="32" fill="#9cb092" fill-opacity="0.7715737217660542"/><rect x="835.29" y="925" width="1.5" height="32" fill="#a4b4a0" fill-opacity="0.8746333801385936"/><rect x="1171.5" y="925" width="3" height="32" fill="#7f8f86" fill-opacity="0.9782989587781987"/><rect x="1293.93" y="925" width="3" height="32" fill="#9cb092" fill-opacity="0.9031356698912805"/><rect x="1234.87" y="925" width="1.5" height="32" fill="#a4b4a0" fill-opacity="0.932463877585063"/><rect x="1230.48" y="925" width="3" height="32" fill="#a4b4a0" fill-opacity="0.7246790250280459"/><rect x="1718.43" y="925" width="1.5" height="32" fill="#8fa88a" fill-opacity="0.7217824097000696"/><rect x="1733.85" y="925" width="1.5" height="32" fill="#a4b4a0" fill-opacity="0.8291956320334899"/><rect x="1104.32" y="925" width="3" height="32" fill="#9cb092" fill-opacity="0.8012696415333026"/><rect x="671.35" y="925" width="3" height="32" fill="#9cb092" fill-opacity="0.8064071086566258"/><rect x="1254.44" y="925" width="1.5" height="32" fill="#9cb092" fill-opacity="0.7964161786235036"/><rect x="714.43" y="925" width="3" height="32" fill="#7f8f86" fill-opacity="0.7655096349739521"/><rect x="944.08" y="925" width="2" height="32" fill="#7f8f86" fill-opacity="0.797214627644323"/><rect x="1129.84" y="925" width="1" height="32" fill="#7f8f86" fill-opacity="0.809992713681503"/><rect x="856.24" y="925" width="1.5" height="32" fill="#9cb092" fill-opacity="0.9701082714206658"/><rect x="1433.03" y="925" width="1.5" height="32" fill="#9cb092" fill-opacity="0.6142499422851401"/><rect x="896.69" y="925" width="2" height="32" fill="#a4b4a0" fill-opacity="0.7288328997004114"/><rect x="916.13" y="925" width="1" height="32" fill="#7f8f86" fill-opacity="0.6419542029490364"/><rect x="1602.24" y="925" width="3" height="32" fill="#a4b4a0" fill-opacity="0.8870784914425875"/><rect x="666.26" y="925" width="1.5" height="32" fill="#7f8f86" fill-opacity="0.9300719008724323"/><rect x="1247.88" y="925" width="1.5" height="32" fill="#8fa88a" fill-opacity="0.8118476069455485"/><rect x="902.79" y="925" width="2" height="32" fill="#a4b4a0" fill-opacity="0.961071011963889"/><rect x="1321.23" y="925" width="1.5" height="32" fill="#8fa88a" fill-opacity="0.6872577243397073"/><rect x="1642.48" y="925" width="1.5" height="32" fill="#8fa88a" fill-opacity="0.9555883533935173"/><rect x="1460.67" y="925" width="3" height="32" fill="#a4b4a0" fill-opacity="0.7551595750362154"/><rect x="1579.93" y="925" width="1.5" height="32" fill="#7f8f86" fill-opacity="0.8173107051549429"/><rect x="866.63" y="925" width="2" height="32" fill="#9cb092" fill-opacity="0.6384227341441334"/><rect x="1669.4" y="925" width="2" height="32" fill="#a4b4a0" fill-opacity="0.6461640975019682"/><rect x="1207.9" y="925" width="3" height="32" fill="#8fa88a" fill-opacity="0.9211374910788301"/><rect x="759.92" y="925" width="3" height="32" fill="#9cb092" fill-opacity="0.9047988788833364"/><rect x="805.53" y="925" width="1.5" height="32" fill="#8fa88a" fill-opacity="0.6459787970897973"/><rect x="1589.02" y="925" width="1" height="32" fill="#a4b4a0" fill-opacity="0.9707569261578853"/><rect x="1294.86" y="925" width="3" height="32" fill="#8fa88a" fill-opacity="0.9805979748993088"/><rect x="727.66" y="925" width="3" height="32" fill="#9cb092" fill-opacity="0.7307309072938095"/><rect x="1121.67" y="925" width="2" height="32" fill="#a4b4a0" fill-opacity="0.772032499939457"/><rect x="654.96" y="925" width="1.5" height="32" fill="#9cb092" fill-opacity="0.9377051478632419"/><rect x="1100.79" y="925" width="3" height="32" fill="#a4b4a0" fill-opacity="0.8957336943453367"/><rect x="1681.24" y="925" width="1" height="32" fill="#8fa88a" fill-opacity="0.6379206613080525"/><rect x="1005.62" y="925" width="3" height="32" fill="#9cb092" fill-opacity="0.920682465558965"/><rect x="1283.46" y="925" width="2" height="32" fill="#8fa88a" fill-opacity="0.8017154711026395"/><rect x="1549.05" y="925" width="1" height="32" fill="#a4b4a0" fill-opacity="0.7118063059785933"/><rect x="1480.84" y="925" width="3" height="32" fill="#8fa88a" fill-opacity="0.9258566884213557"/><rect x="790.47" y="925" width="2" height="32" fill="#a4b4a0" fill-opacity="0.9519366041984376"/><rect x="1506.63" y="925" width="1.5" height="32" fill="#8fa88a" fill-opacity="0.7622982031310461"/><rect x="719.69" y="925" width="1" height="32" fill="#a4b4a0" fill-opacity="0.7206757648850691"/><rect x="651.97" y="925" width="1" height="32" fill="#a4b4a0" fill-opacity="0.9962316353282692"/><rect x="902.17" y="925" width="3" height="32" fill="#a4b4a0" fill-opacity="0.7351262456656927"/><rect x="1283.34" y="925" width="3" height="32" fill="#9cb092" fill-opacity="0.7558376297792736"/><rect x="1365.44" y="925" width="1" height="32" fill="#9cb092" fill-opacity="0.9046958815913633"/><rect x="769.63" y="925" width="2" height="32" fill="#9cb092" fill-opacity="0.895517951956484"/><rect x="1141.1" y="925" width="3" height="32" fill="#9cb092" fill-opacity="0.9045221006734553"/><rect x="652.18" y="925" width="2" height="32" fill="#a4b4a0" fill-opacity="0.7003549822440496"/><rect x="1261.29" y="925" width="1" height="32" fill="#7f8f86" fill-opacity="0.9868545130511366"/><rect x="1360.64" y="925" width="1" height="32" fill="#9cb092" fill-opacity="0.8197662401125925"/><rect x="1076.46" y="925" width="1.5" height="32" fill="#8fa88a" fill-opacity="0.7543609931223438"/><rect x="1606.48" y="925" width="3" height="32" fill="#9cb092" fill-opacity="0.7718313245334428"/><rect x="1115.19" y="925" width="2" height="32" fill="#7f8f86" fill-opacity="0.8391328046095209"/><rect x="1239.1" y="925" width="2" height="32" fill="#7f8f86" fill-opacity="0.8620446183376187"/><rect x="1389.53" y="925" width="1.5" height="32" fill="#a4b4a0" fill-opacity="0.6107445240438355"/><rect x="1301.67" y="925" width="3" height="32" fill="#8fa88a" fill-opacity="0.763522311313881"/><rect x="699.63" y="925" width="1" height="32" fill="#a4b4a0" fill-opacity="0.8993452471428247"/><rect x="1297.08" y="925" width="1.5" height="32" fill="#a4b4a0" fill-opacity="0.6294017130064714"/><rect x="1125.14" y="925" width="1.5" height="32" fill="#7f8f86" fill-opacity="0.7003691434060575"/><rect x="691.32" y="925" width="3" height="32" fill="#9cb092" fill-opacity="0.9749083811347735"/><rect x="1212.41" y="797" width="3" height="32" fill="#7a5a8a" fill-opacity="0.7797580188444647"/><rect x="1096" y="797" width="2" height="32" fill="#6a4a80" fill-opacity="0.7952154073927205"/><rect x="1460.67" y="797" width="1" height="32" fill="#56386a" fill-opacity="0.6007185287465049"/><rect x="657.07" y="797" width="2" height="32" fill="#6a4a80" fill-opacity="0.5953604244937936"/><rect x="1418.18" y="797" width="2" height="32" fill="#6a4a80" fill-opacity="0.4348161660136045"/><rect x="813.56" y="797" width="4" height="32" fill="#7a5a8a" fill-opacity="0.7992630303827526"/><rect x="1084.2" y="797" width="1" height="32" fill="#56386a" fill-opacity="0.44384486464249423"/><rect x="735.25" y="797" width="2" height="32" fill="#56386a" fill-opacity="0.487049505811685"/><rect x="1312.38" y="797" width="1" height="32" fill="#56386a" fill-opacity="0.6843160325859323"/><rect x="1567.73" y="797" width="1" height="32" fill="#6a4a80" fill-opacity="0.6396711806574322"/><rect x="686.56" y="797" width="2" height="32" fill="#56386a" fill-opacity="0.7091423085088698"/><rect x="1560.14" y="797" width="4" height="32" fill="#7a5a8a" fill-opacity="0.4336011582927433"/><rect x="1308.51" y="797" width="4" height="32" fill="#6a4a80" fill-opacity="0.4043063203021236"/><rect x="1528.47" y="797" width="2" height="32" fill="#6a4a80" fill-opacity="0.4352193379062806"/><rect x="807.24" y="797" width="2" height="32" fill="#56386a" fill-opacity="0.6715223347161274"/><rect x="1540.96" y="797" width="2" height="32" fill="#6a4a80" fill-opacity="0.48149541079461766"/><rect x="1414.88" y="797" width="1" height="32" fill="#56386a" fill-opacity="0.7903910668697596"/><rect x="1534.1" y="797" width="3" height="32" fill="#7a5a8a" fill-opacity="0.4150915488521109"/><rect x="1665.69" y="797" width="2" height="32" fill="#56386a" fill-opacity="0.6545556934554624"/><rect x="1618.87" y="797" width="4" height="32" fill="#6a4a80" fill-opacity="0.738290108339822"/><rect x="744.35" y="797" width="2" height="32" fill="#56386a" fill-opacity="0.7885410885488972"/><rect x="1547.38" y="797" width="4" height="32" fill="#7a5a8a" fill-opacity="0.669087367570627"/><rect x="792.42" y="797" width="1" height="32" fill="#56386a" fill-opacity="0.7748530992953973"/><rect x="1481.44" y="797" width="4" height="32" fill="#56386a" fill-opacity="0.6361526404760016"/><rect x="1075.79" y="797" width="3" height="32" fill="#56386a" fill-opacity="0.7137721387672875"/><rect x="1484.89" y="797" width="1" height="32" fill="#56386a" fill-opacity="0.6126684983229649"/><rect x="716.84" y="797" width="2" height="32" fill="#7a5a8a" fill-opacity="0.7002860898923047"/><rect x="911.2" y="797" width="2" height="32" fill="#56386a" fill-opacity="0.5831619219827824"/><rect x="1631.2" y="797" width="1" height="32" fill="#56386a" fill-opacity="0.7632475612558526"/><rect x="1082.78" y="797" width="3" height="32" fill="#7a5a8a" fill-opacity="0.7174586761795141"/><rect x="1572.71" y="829" width="2" height="32" fill="#7a5a8a" fill-opacity="0.7792466345044926"/><rect x="1376.97" y="829" width="4" height="32" fill="#7a5a8a" fill-opacity="0.6653118330087247"/><rect x="1535.64" y="829" width="1" height="32" fill="#6a4a80" fill-opacity="0.5201880797417551"/><rect x="1714.14" y="829" width="3" height="32" fill="#7a5a8a" fill-opacity="0.5674628806436259"/><rect x="1156.73" y="829" width="1" height="32" fill="#7a5a8a" fill-opacity="0.6181617683579236"/><rect x="1039.52" y="829" width="3" height="32" fill="#7a5a8a" fill-opacity="0.64771053204706"/><rect x="1019.31" y="829" width="4" height="32" fill="#7a5a8a" fill-opacity="0.474915509525468"/><rect x="1100.21" y="829" width="1" height="32" fill="#56386a" fill-opacity="0.7228526152423933"/><rect x="884.34" y="829" width="2" height="32" fill="#56386a" fill-opacity="0.41660867743386903"/><rect x="1080.13" y="829" width="3" height="32" fill="#7a5a8a" fill-opacity="0.7830828104940182"/><rect x="829.1" y="829" width="4" height="32" fill="#7a5a8a" fill-opacity="0.7559424543853159"/><rect x="988.53" y="829" width="2" height="32" fill="#7a5a8a" fill-opacity="0.7823134925252448"/><rect x="1607.69" y="829" width="1" height="32" fill="#6a4a80" fill-opacity="0.5563744232868949"/><rect x="640.4" y="829" width="2" height="32" fill="#6a4a80" fill-opacity="0.4414966343194393"/><rect x="1153.44" y="829" width="3" height="32" fill="#56386a" fill-opacity="0.5003248475092222"/><rect x="1403.82" y="829" width="4" height="32" fill="#56386a" fill-opacity="0.6938286240764038"/><rect x="792.52" y="829" width="1" height="32" fill="#7a5a8a" fill-opacity="0.6665232968808044"/><rect x="1220.87" y="829" width="3" height="32" fill="#7a5a8a" fill-opacity="0.5776388325284253"/><rect x="1048.68" y="829" width="4" height="32" fill="#56386a" fill-opacity="0.6837138284204127"/><rect x="1699.26" y="829" width="4" height="32" fill="#56386a" fill-opacity="0.4238745746230667"/><rect x="1197.23" y="861" width="1" height="32" fill="#56386a" fill-opacity="0.7904794008075993"/><rect x="1628.56" y="861" width="4" height="32" fill="#56386a" fill-opacity="0.44762167500678623"/><rect x="1145.72" y="861" width="4" height="32" fill="#56386a" fill-opacity="0.756443721509848"/><rect x="679.65" y="861" width="1" height="32" fill="#7a5a8a" fill-opacity="0.5929886196166058"/><rect x="1716.39" y="861" width="1" height="32" fill="#7a5a8a" fill-opacity="0.45781050678390145"/><rect x="1766.91" y="861" width="3" height="32" fill="#6a4a80" fill-opacity="0.6989495056556807"/><rect x="1348.53" y="861" width="1" height="32" fill="#6a4a80" fill-opacity="0.5164685182955161"/><rect x="1115.18" y="861" width="4" height="32" fill="#7a5a8a" fill-opacity="0.6595195117125487"/><rect x="1196.84" y="861" width="3" height="32" fill="#56386a" fill-opacity="0.5440963467682931"/><rect x="1006.19" y="861" width="1" height="32" fill="#56386a" fill-opacity="0.5983047033127401"/><rect x="1536.44" y="861" width="2" height="32" fill="#7a5a8a" fill-opacity="0.757488719045773"/><rect x="1222.81" y="861" width="2" height="32" fill="#6a4a80" fill-opacity="0.4648598233103797"/><rect x="1409.65" y="861" width="4" height="32" fill="#6a4a80" fill-opacity="0.634909335665799"/><rect x="1517.71" y="861" width="2" height="32" fill="#7a5a8a" fill-opacity="0.7848502954647708"/><rect x="947.62" y="861" width="3" height="32" fill="#7a5a8a" fill-opacity="0.4789404529950492"/><rect x="1688.23" y="861" width="3" height="32" fill="#7a5a8a" fill-opacity="0.4433711876915567"/><rect x="1048.64" y="861" width="4" height="32" fill="#7a5a8a" fill-opacity="0.5542068415679666"/><rect x="941.41" y="861" width="4" height="32" fill="#6a4a80" fill-opacity="0.770320412244725"/><rect x="1206.17" y="861" width="3" height="32" fill="#7a5a8a" fill-opacity="0.6548448090548734"/><rect x="689.64" y="861" width="4" height="32" fill="#7a5a8a" fill-opacity="0.7028308973779657"/><rect x="1387.01" y="861" width="1" height="32" fill="#56386a" fill-opacity="0.5646893166084045"/><rect x="951.05" y="861" width="4" height="32" fill="#7a5a8a" fill-opacity="0.6869204846545751"/><rect x="1237.89" y="861" width="1" height="32" fill="#7a5a8a" fill-opacity="0.7405651379531465"/><rect x="933.36" y="861" width="3" height="32" fill="#6a4a80" fill-opacity="0.4165320561295653"/><rect x="1039.45" y="861" width="2" height="32" fill="#7a5a8a" fill-opacity="0.506208705843946"/><rect x="1640.61" y="893" width="4" height="32" fill="#56386a" fill-opacity="0.4385616563371885"/><rect x="1582.45" y="893" width="3" height="32" fill="#56386a" fill-opacity="0.44450966098914907"/><rect x="827.41" y="893" width="1" height="32" fill="#6a4a80" fill-opacity="0.786917852529645"/><rect x="1514.92" y="893" width="3" height="32" fill="#7a5a8a" fill-opacity="0.7366459546695766"/><rect x="1091.77" y="893" width="3" height="32" fill="#7a5a8a" fill-opacity="0.722293005397419"/><rect x="1617.04" y="893" width="4" height="32" fill="#56386a" fill-opacity="0.7486507122022489"/><rect x="1396.1" y="893" width="3" height="32" fill="#7a5a8a" fill-opacity="0.45342594746665066"/><rect x="1410.21" y="893" width="1" height="32" fill="#7a5a8a" fill-opacity="0.426715718216107"/><rect x="1602.26" y="893" width="4" height="32" fill="#56386a" fill-opacity="0.4942172395522093"/><rect x="1095.96" y="893" width="2" height="32" fill="#56386a" fill-opacity="0.6915018268639228"/><rect x="810.73" y="893" width="2" height="32" fill="#56386a" fill-opacity="0.7398699872318357"/><rect x="1205.39" y="893" width="4" height="32" fill="#7a5a8a" fill-opacity="0.7595262290044773"/><rect x="1632.46" y="893" width="4" height="32" fill="#6a4a80" fill-opacity="0.658981867742866"/><rect x="1331.65" y="893" width="3" height="32" fill="#7a5a8a" fill-opacity="0.6848083825925344"/><rect x="1326.37" y="893" width="3" height="32" fill="#6a4a80" fill-opacity="0.5237008097584249"/><rect x="1403.55" y="893" width="1" height="32" fill="#6a4a80" fill-opacity="0.5438863576153403"/><rect x="777.62" y="893" width="4" height="32" fill="#7a5a8a" fill-opacity="0.4873569339615982"/><rect x="1350.73" y="893" width="1" height="32" fill="#6a4a80" fill-opacity="0.5787489362807894"/><rect x="1743.83" y="893" width="1" height="32" fill="#56386a" fill-opacity="0.6219646680226029"/><rect x="684.73" y="893" width="2" height="32" fill="#7a5a8a" fill-opacity="0.44421829427399007"/><rect x="972.24" y="893" width="2" height="32" fill="#7a5a8a" fill-opacity="0.7858874122233281"/><rect x="886.07" y="893" width="1" height="32" fill="#6a4a80" fill-opacity="0.5126834357959185"/><rect x="891.86" y="893" width="3" height="32" fill="#6a4a80" fill-opacity="0.4113489950024365"/><rect x="1118.81" y="893" width="3" height="32" fill="#6a4a80" fill-opacity="0.7818079818189445"/><rect x="1458.36" y="893" width="4" height="32" fill="#56386a" fill-opacity="0.44495145201724584"/><rect x="1218.4" y="893" width="1" height="32" fill="#56386a" fill-opacity="0.5636112190076152"/><rect x="1548.31" y="893" width="3" height="32" fill="#56386a" fill-opacity="0.5317700822884617"/><rect x="720.63" y="893" width="4" height="32" fill="#7a5a8a" fill-opacity="0.6302413407973744"/><rect x="1152.76" y="893" width="4" height="32" fill="#56386a" fill-opacity="0.7521553239477031"/><rect x="855.44" y="893" width="4" height="32" fill="#56386a" fill-opacity="0.475965515112525"/><rect x="827.01" y="925" width="1" height="32" fill="#6a4a80" fill-opacity="0.43058006386755104"/><rect x="1135.41" y="925" width="2" height="32" fill="#6a4a80" fill-opacity="0.7160950979701787"/><rect x="1513.46" y="925" width="3" height="32" fill="#6a4a80" fill-opacity="0.6241069518194957"/><rect x="1484.47" y="925" width="1" height="32" fill="#6a4a80" fill-opacity="0.7679781160931013"/><rect x="710.85" y="925" width="3" height="32" fill="#6a4a80" fill-opacity="0.5671659291178393"/><rect x="1269.98" y="925" width="3" height="32" fill="#56386a" fill-opacity="0.4654589073818225"/><rect x="1759.86" y="925" width="2" height="32" fill="#7a5a8a" fill-opacity="0.44210408939195145"/><rect x="1420.85" y="925" width="4" height="32" fill="#7a5a8a" fill-opacity="0.759593749133899"/><rect x="1512.78" y="925" width="2" height="32" fill="#7a5a8a" fill-opacity="0.442679974013943"/><rect x="1051" y="925" width="1" height="32" fill="#7a5a8a" fill-opacity="0.5944081335978836"/><rect x="1669.79" y="925" width="2" height="32" fill="#7a5a8a" fill-opacity="0.5904969420948702"/><rect x="1600.04" y="925" width="4" height="32" fill="#56386a" fill-opacity="0.6253663964606466"/><rect x="876.39" y="925" width="2" height="32" fill="#7a5a8a" fill-opacity="0.6625320912039829"/><rect x="1442.19" y="925" width="4" height="32" fill="#56386a" fill-opacity="0.5746989601088016"/><rect x="821.8" y="925" width="1" height="32" fill="#7a5a8a" fill-opacity="0.4535318646976883"/><rect x="765.52" y="925" width="4" height="32" fill="#56386a" fill-opacity="0.6341386781074575"/><rect x="671.18" y="925" width="1" height="32" fill="#6a4a80" fill-opacity="0.5854847841869855"/><rect x="870.37" y="925" width="1" height="32" fill="#56386a" fill-opacity="0.6136731592234337"/><rect x="1609.7" y="925" width="4" height="32" fill="#7a5a8a" fill-opacity="0.6498323427426345"/><rect x="1187.27" y="925" width="1" height="32" fill="#56386a" fill-opacity="0.7616224175862081"/><rect x="914.93" y="925" width="1" height="32" fill="#7a5a8a" fill-opacity="0.5530443426388395"/><rect x="750.76" y="925" width="4" height="32" fill="#6a4a80" fill-opacity="0.7779285198447264"/><rect x="1155.51" y="925" width="4" height="32" fill="#56386a" fill-opacity="0.7681895960461455"/><rect x="1500.33" y="925" width="1" height="32" fill="#56386a" fill-opacity="0.689791010973416"/><rect x="1613.29" y="925" width="2" height="32" fill="#6a4a80" fill-opacity="0.5600864251014677"/><rect x="1449.66" y="925" width="4" height="32" fill="#7a5a8a" fill-opacity="0.6768128629941477"/><rect x="1324.36" y="925" width="4" height="32" fill="#6a4a80" fill-opacity="0.7636106654941162"/><rect x="710.87" y="925" width="2" height="32" fill="#6a4a80" fill-opacity="0.7199915289486749"/><rect x="645.53" y="925" width="2" height="32" fill="#56386a" fill-opacity="0.715221302942116"/><rect x="1355.99" y="925" width="2" height="32" fill="#56386a" fill-opacity="0.6591112674423774"/><rect x="745.94" y="925" width="1" height="32" fill="#6a4a80" fill-opacity="0.721088060739474"/><rect x="1166.95" y="925" width="2" height="32" fill="#7a5a8a" fill-opacity="0.49618032259097045"/><rect x="1515.74" y="925" width="4" height="32" fill="#6a4a80" fill-opacity="0.772141869533616"/><rect x="937.01" y="925" width="4" height="32" fill="#6a4a80" fill-opacity="0.5871660918540422"/><rect x="1495.17" y="925" width="1" height="32" fill="#6a4a80" fill-opacity="0.7038049071227099"/><rect x="851.15" y="925" width="3" height="32" fill="#56386a" fill-opacity="0.4651269394633202"/><rect x="759.5" y="925" width="1" height="32" fill="#7a5a8a" fill-opacity="0.7665401157108401"/><rect x="721.48" y="925" width="1" height="32" fill="#6a4a80" fill-opacity="0.6223578830011345"/><rect x="1207.55" y="925" width="1" height="32" fill="#56386a" fill-opacity="0.6451226609783183"/><rect x="1437.35" y="925" width="3" height="32" fill="#56386a" fill-opacity="0.6181882846804976"/><rect x="1156.27" y="925" width="2" height="32" fill="#56386a" fill-opacity="0.40305288004845063"/><rect x="667.19" y="925" width="4" height="32" fill="#56386a" fill-opacity="0.7246204252162352"/><rect x="875.79" y="925" width="2" height="32" fill="#56386a" fill-opacity="0.6600233040319272"/><rect x="1398.72" y="925" width="1" height="32" fill="#6a4a80" fill-opacity="0.6450721173776853"/><rect x="1256.84" y="925" width="1" height="32" fill="#7a5a8a" fill-opacity="0.6710605922163455"/><rect x="1464.73" y="925" width="3" height="32" fill="#6a4a80" fill-opacity="0.4359132867085559"/><rect x="981.93" y="925" width="3" height="32" fill="#7a5a8a" fill-opacity="0.4591291978780505"/><rect x="1508.35" y="925" width="1" height="32" fill="#6a4a80" fill-opacity="0.4315417083352668"/><rect x="768.39" y="925" width="2" height="32" fill="#56386a" fill-opacity="0.7069459903203382"/><rect x="1227.48" y="925" width="2" height="32" fill="#7a5a8a" fill-opacity="0.7934921008568796"/><rect x="1675.08" y="925" width="1" height="32" fill="#56386a" fill-opacity="0.7008042389051685"/><rect x="1671.09" y="925" width="1" height="32" fill="#6a4a80" fill-opacity="0.6866683057821242"/><rect x="1396.9" y="925" width="4" height="32" fill="#6a4a80" fill-opacity="0.7399911132787921"/><rect x="1544.87" y="925" width="3" height="32" fill="#6a4a80" fill-opacity="0.4719246107897765"/><rect x="1138.94" y="925" width="3" height="32" fill="#56386a" fill-opacity="0.4536558933634947"/><rect x="1595.89" y="925" width="1" height="32" fill="#6a4a80" fill-opacity="0.5297658603855733"/><rect x="823.13" y="925" width="4" height="32" fill="#6a4a80" fill-opacity="0.7923497705062751"/><rect x="1501.05" y="925" width="2" height="32" fill="#7a5a8a" fill-opacity="0.509678443681072"/><rect x="654.86" y="925" width="2" height="32" fill="#56386a" fill-opacity="0.4083702484986568"/><rect x="1254.42" y="925" width="3" height="32" fill="#7a5a8a" fill-opacity="0.7683613503458147"/><rect x="1392.59" y="701" width="1" height="32" fill="#a6725e" fill-opacity="0.7225360967782188"/><rect x="1564.8" y="701" width="1" height="32" fill="#a6725e" fill-opacity="0.7827350851331152"/><rect x="1509.53" y="701" width="1" height="32" fill="#a6725e" fill-opacity="0.7766974989996251"/><rect x="798.99" y="701" width="1" height="32" fill="#a6725e" fill-opacity="0.6396867963134316"/><rect x="1712.89" y="701" width="1" height="32" fill="#a6725e" fill-opacity="0.6946923659410773"/><rect x="1670.45" y="701" width="1" height="32" fill="#a6725e" fill-opacity="0.5339617893959433"/><rect x="1238.83" y="733" width="1" height="32" fill="#a6725e" fill-opacity="0.5739718497859491"/><rect x="1313.49" y="733" width="1" height="32" fill="#a6725e" fill-opacity="0.6721823563784303"/><rect x="783.11" y="733" width="1" height="32" fill="#a6725e" fill-opacity="0.5650189401391544"/><rect x="1049.34" y="733" width="1" height="32" fill="#a6725e" fill-opacity="0.7749036115425656"/><rect x="1535.34" y="733" width="1" height="32" fill="#a6725e" fill-opacity="0.5478812637074115"/><rect x="1566.75" y="733" width="1" height="32" fill="#a6725e" fill-opacity="0.541630225519671"/><rect x="1387.14" y="733" width="1" height="32" fill="#a6725e" fill-opacity="0.538009769765081"/><rect x="771.77" y="733" width="1" height="32" fill="#a6725e" fill-opacity="0.7614214234172847"/><rect x="979.35" y="733" width="1" height="32" fill="#a6725e" fill-opacity="0.5646443507674197"/><rect x="1751.93" y="733" width="1" height="32" fill="#a6725e" fill-opacity="0.7617223296310406"/><rect x="1059.16" y="829" width="1" height="32" fill="#a6725e" fill-opacity="0.788443396685025"/><rect x="1308.95" y="829" width="1" height="32" fill="#a6725e" fill-opacity="0.7033491431751777"/><rect x="974.68" y="829" width="1" height="32" fill="#a6725e" fill-opacity="0.7822928003263998"/><rect x="1460.3" y="829" width="1" height="32" fill="#a6725e" fill-opacity="0.7899692936951587"/><rect x="1663.29" y="829" width="1" height="32" fill="#a6725e" fill-opacity="0.5896366693561603"/><rect x="1131.01" y="829" width="1" height="32" fill="#a6725e" fill-opacity="0.5497868171389236"/><rect x="915.63" y="829" width="1" height="32" fill="#a6725e" fill-opacity="0.5195419140127029"/><rect x="1071.21" y="829" width="1" height="32" fill="#a6725e" fill-opacity="0.6809329992222963"/><rect x="773.38" y="861" width="1" height="32" fill="#a6725e" fill-opacity="0.7033802748643074"/><rect x="1107.73" y="861" width="1" height="32" fill="#a6725e" fill-opacity="0.5929873794809386"/><rect x="1588.11" y="861" width="1" height="32" fill="#a6725e" fill-opacity="0.6442235559890117"/><rect x="1085.64" y="861" width="1" height="32" fill="#a6725e" fill-opacity="0.6443655158710592"/><rect x="1474.32" y="861" width="1" height="32" fill="#a6725e" fill-opacity="0.517100278860737"/><rect x="1744.61" y="861" width="1" height="32" fill="#a6725e" fill-opacity="0.5068596689758162"/><rect x="1519.42" y="861" width="1" height="32" fill="#a6725e" fill-opacity="0.7534642668164389"/><rect x="788.06" y="861" width="1" height="32" fill="#a6725e" fill-opacity="0.7363214911941303"/><rect x="1136" y="861" width="1" height="32" fill="#a6725e" fill-opacity="0.6735556487170624"/><rect x="779.07" y="861" width="1" height="32" fill="#a6725e" fill-opacity="0.5140181356096825"/><rect x="950.83" y="861" width="1" height="32" fill="#a6725e" fill-opacity="0.7865539698773499"/><rect x="966.42" y="861" width="1" height="32" fill="#a6725e" fill-opacity="0.7267209237353953"/><rect x="1699.19" y="893" width="1" height="32" fill="#a6725e" fill-opacity="0.7826131488283099"/><rect x="1114.21" y="893" width="1" height="32" fill="#a6725e" fill-opacity="0.6064379615173737"/><rect x="1294.44" y="893" width="1" height="32" fill="#a6725e" fill-opacity="0.7326809044096987"/><rect x="878" y="893" width="1" height="32" fill="#a6725e" fill-opacity="0.724519416945399"/><rect x="1566.83" y="893" width="1" height="32" fill="#a6725e" fill-opacity="0.757908295756274"/><rect x="806.61" y="893" width="1" height="32" fill="#a6725e" fill-opacity="0.7837400555126552"/><rect x="660.2" y="573" width="5.6" height="387" fill="#13162e"/><rect x="686.9" y="573" width="6" height="387" fill="#13162e"/><rect x="718.5" y="573" width="5.25" height="387" fill="#13162e"/><rect x="761.7" y="573" width="4.3" height="387" fill="#13162e"/><rect x="764.4" y="701" width="3" height="32" fill="#8a3a50" fill-opacity="0.9"/><rect x="640.4" y="765" width="8.8" height="32" fill="#a6725e"/><rect x="665.8" y="765" width="10" height="32" fill="#a6725e"/><rect x="692.9" y="765" width="12.1" height="32" fill="#a6725e"/><rect x="723.75" y="765" width="11.45" height="32" fill="#a6725e"/><rect x="767.5" y="765" width="12.9" height="32" fill="#a6725e"/><rect x="924" y="765" width="2" height="32" fill="#a6725e" fill-opacity="0.9"/><rect x="906.5" y="733" width="1" height="32" fill="#a6725e" fill-opacity="0.6"/><rect x="1526.7" y="925" width="17.8" height="32" fill="#8aa988"/><rect x="1867" y="541" width="1" height="419" fill="#dfe6ee" fill-opacity="0.85"/><rect x="1089" y="957" width="522" height="3" fill="#ded0ea"/><text class="fl" x="935.3" y="599.5">[anon...</text><text class="fl" x="935.3" y="631.5">on</text><text class="fl" x="1045.9" y="599.5">[anonymous]</text><text class="fl" x="1045.9" y="631.5">on</text><text class="fl" x="1273.4" y="599.5">[an...</text><text class="fl" x="1273.4" y="631.5">on</text><text class="fl" x="1497.3" y="599.5">[an...</text><text class="fl" x="1497.3" y="631.5">on</text><text class="fl" x="1651.7" y="599.5">[anony...</text><text class="fl" x="1651.7" y="631.5">on</text><text class="fl" x="935.3" y="663.5">an</text><text class="fl" x="935.3" y="695.5">_t</text><text class="fl" x="1045.9" y="663.5">an</text><text class="fl" x="1045.9" y="695.5">_t</text></svg>
</body></html>
